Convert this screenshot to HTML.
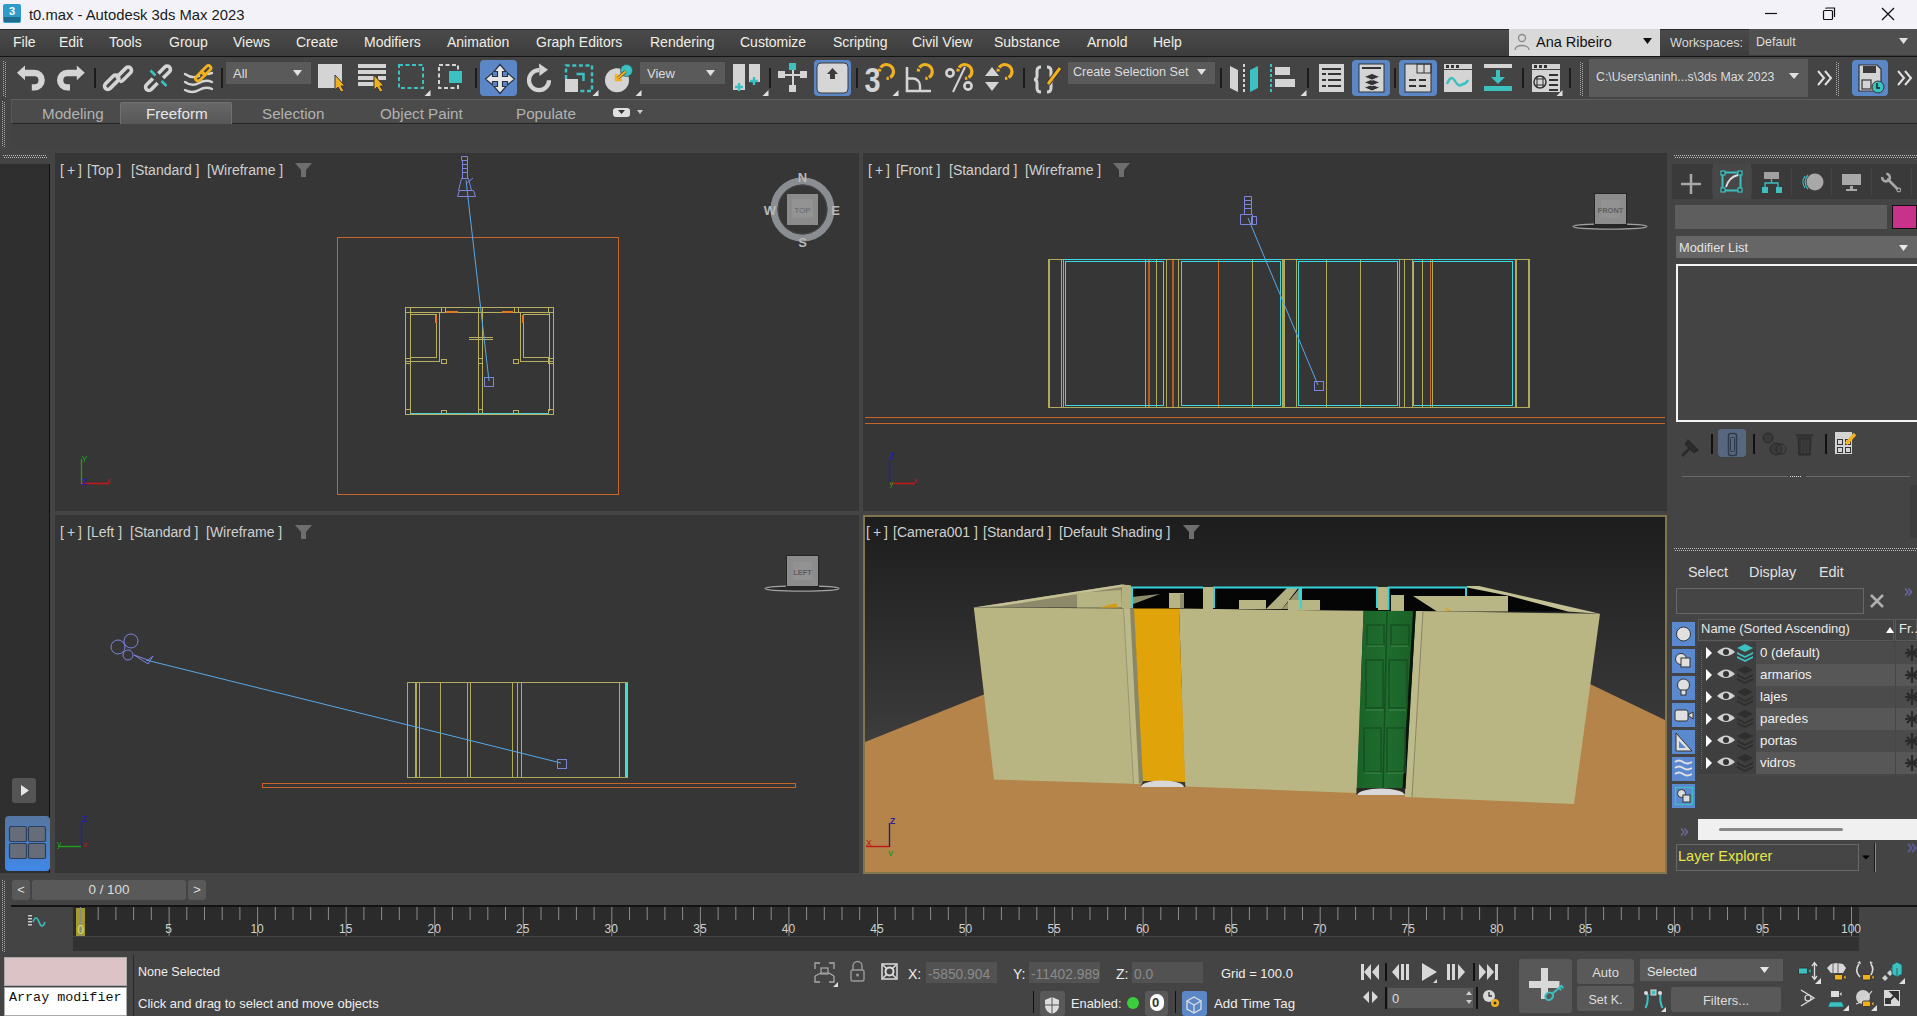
<!DOCTYPE html>
<html><head><meta charset="utf-8"><title>3ds Max</title>
<style>
*{box-sizing:border-box;margin:0;padding:0}
html,body{width:1917px;height:1016px;overflow:hidden;background:#444;font-family:"Liberation Sans",sans-serif;color:#ddd;position:relative}
.a{position:absolute;white-space:pre}
.ov{position:absolute;left:0;top:0;pointer-events:none}
#title{left:0;top:0;width:1917px;height:29px;background:#f2f2f8;color:#1a1a1a;font-size:14.8px}
#menu{left:0;top:29px;width:1917px;height:28px;background:linear-gradient(#4a4a4a,#3c3c3c);border-top:1px solid #2a2a2a;border-bottom:1px solid #141414}
#menu span{position:absolute;top:3.5px;font-size:14px;color:#f0eee6}
.dd{position:absolute;background:#5b5b5b;color:#dcdcdc;font-size:14px}
.vp{position:absolute;background:#363636;overflow:hidden}
.vlabel{position:absolute;left:0;top:9px;font-size:14px;color:#d0d0d0;white-space:pre;letter-spacing:0}
.vlabel span{word-spacing:0}
.btn{position:absolute;background:#595959;border-radius:3px;color:#ddd;font-size:13px;text-align:center}

</style></head><body>
<div id="title" class="a">
  <div class="a" style="left:29px;top:6.5px">t0.max - Autodesk 3ds Max 2023</div>
</div>
<div id="menu" class="a">
<span style="left:13px">File</span><span style="left:59px">Edit</span><span style="left:109px">Tools</span><span style="left:169px">Group</span><span style="left:233px">Views</span><span style="left:296px">Create</span><span style="left:364px">Modifiers</span><span style="left:447px">Animation</span><span style="left:536px">Graph Editors</span><span style="left:650px">Rendering</span><span style="left:740px">Customize</span><span style="left:833px">Scripting</span><span style="left:912px">Civil View</span><span style="left:994px">Substance</span><span style="left:1087px">Arnold</span><span style="left:1153px">Help</span>
</div>
<div class="a" style="left:1509px;top:29px;width:151px;height:27px;background:#d9d9d9"></div>
<div class="a" style="left:1536px;top:34px;font-size:14.5px;color:#111">Ana Ribeiro</div>
<div class="a" style="left:1670px;top:36px;font-size:12.7px;color:#d8d8d8">Workspaces:</div>
<div class="a" style="left:1749px;top:29px;width:168px;height:26px;background:#4f4f4f"></div>
<div class="a" style="left:1756px;top:35px;font-size:12.5px;color:#ddd">Default</div>
<!-- toolbar -->
<div class="a" style="left:226px;top:62px;width:85px;height:22px;background:#5a5a5a"></div>
<div class="a" style="left:233px;top:66px;font-size:13px;color:#ddd">All</div>
<div class="a" style="left:640px;top:62px;width:85px;height:22px;background:#5a5a5a"></div>
<div class="a" style="left:647px;top:66px;font-size:13px;color:#ddd">View</div>
<div class="a" style="left:1068px;top:62px;width:147px;height:22px;background:#5a5a5a"></div>
<div class="a" style="left:1073px;top:65px;font-size:12.6px;color:#ddd">Create Selection Set</div>
<div class="a" style="left:1589px;top:59px;width:219px;height:38px;background:#5a5a5a"></div>
<div class="a" style="left:1596px;top:70px;font-size:12.3px;color:#ddd">C:\Users\aninh...s\3ds Max 2023</div>
<div class="a" style="left:480px;top:60px;width:37px;height:36px;background:#5b87c6;border-radius:4px"></div>
<div class="a" style="left:814px;top:60px;width:37px;height:36px;background:#5b87c6;border-radius:4px"></div>
<div class="a" style="left:1352px;top:60px;width:38px;height:36px;background:#5b87c6;border-radius:4px"></div>
<div class="a" style="left:1399px;top:60px;width:38px;height:36px;background:#5b87c6;border-radius:4px"></div>
<div class="a" style="left:1852px;top:60px;width:36px;height:36px;background:#5b87c6;border-radius:4px"></div>
<!-- ribbon -->
<div class="a" style="left:11px;top:99px;width:1906px;height:25px;background:#4b4b4b;border-top:1px solid #5e5e5e;border-left:1px solid #585858;border-bottom:1px solid #262626"></div>
<div class="a" style="left:120px;top:102px;width:112px;height:22px;background:linear-gradient(#676767,#575757);border:1px solid #707070;border-bottom:none;border-radius:2px 2px 0 0"></div>
<div class="a" style="left:42px;top:104.5px;font-size:15.2px;color:#b2b2b2">Modeling</div>
<div class="a" style="left:146px;top:104.5px;font-size:15.2px;color:#e6e6e6">Freeform</div>
<div class="a" style="left:262px;top:104.5px;font-size:15.2px;color:#b2b2b2">Selection</div>
<div class="a" style="left:380px;top:104.5px;font-size:15.2px;color:#b2b2b2">Object Paint</div>
<div class="a" style="left:516px;top:104.5px;font-size:15.2px;color:#b2b2b2">Populate</div>
<div class="a" style="left:11px;top:124px;width:1906px;height:24px;background:#434343"></div>
<!-- left strip -->
<div class="a" style="left:0;top:164px;width:49px;height:709px;background:#2f2f2f"></div>
<div class="a" style="left:49px;top:164px;width:1px;height:709px;background:#0e0e0e"></div>

<!-- TOP viewport -->
<div class="vp" style="left:55px;top:153px;width:804px;height:358px">
<svg width="804" height="358" viewBox="55 153 804 358" style="position:absolute;left:0;top:0">
 <g fill="none" stroke-width="1" shape-rendering="crispEdges">
  <rect x="337" y="237" width="281.5" height="257.5" stroke="#c8662a"/>
  <g stroke="#b8b060">
   <rect x="405.5" y="307.5" width="148" height="107"/>
   <path d="M410.5 410.5V312.5H549.5V410.5"/>
   <path d="M478.5 307.5V414.5M482.5 307.5V414.5"/>
   <path d="M410.5 314.5H436.5V357.5H410.5 M439.5 312.5V361.5H405.5"/>
   <path d="M549.5 314.5H523.5V357.5H549.5 M520.5 312.5V361.5H553.5"/>
   <rect x="405.5" y="307.5" width="5" height="5"/><rect x="548.5" y="307.5" width="5" height="5"/>
   <rect x="405.5" y="409.5" width="5" height="5"/><rect x="548.5" y="409.5" width="5" height="5"/>
   <rect x="478.5" y="358.5" width="4" height="5"/><rect x="478.5" y="409.5" width="4" height="5"/>
   <rect x="405.5" y="358.5" width="5" height="5"/><rect x="548.5" y="358.5" width="5" height="5"/>
   <rect x="441.5" y="359.5" width="5" height="4"/><rect x="513.5" y="359.5" width="5" height="4"/>
   <rect x="441.5" y="410.5" width="5" height="4"/><rect x="513.5" y="410.5" width="5" height="4"/>
   <rect x="441.5" y="307.5" width="4" height="5"/><rect x="514.5" y="307.5" width="4" height="5"/>
   <path d="M468.5 337.5H492.5M468.5 339.5H492.5"/>
  </g>
  <g stroke="#e07a20" stroke-width="2">
   <path d="M446 312H458M502 312H513M436 315V323M523 315V323"/>
  </g>
  <path d="M410 413.5H549" stroke="#50d0d8" stroke-width="1.5"/>
 </g>
 <g fill="none" stroke="#7c84dc" stroke-width="1">
  <path d="M466 180L489 381" stroke="#58a8e8"/>
  <rect x="484.5" y="377.5" width="9" height="9"/>
  <path d="M461.5 156.5h6v4h-6zM462.5 160.5h5v18h-5zM462.5 164.5h5M462.5 168.5h5M462.5 172.5h5M461.5 178.5h7l3 12h-13z M459.5 190.5h14l2 6h-18z M466 184l7 -6"/>
 </g>
 <!-- compass -->
 <circle cx="802.5" cy="209.5" r="28.5" fill="none" stroke="#8a8d92" stroke-width="7"/>
 <circle cx="802.5" cy="209.5" r="24.5" fill="none" stroke="#4a4a4a" stroke-width="1"/>
 <rect x="787" y="194" width="31" height="31" fill="#8b8b8b"/>
 <rect x="792" y="199" width="21" height="19" fill="#939393"/>
 <text x="802.5" y="213" font-size="8" fill="#666" text-anchor="middle" font-family="Liberation Sans">TOP</text>
 <g font-family="Liberation Sans" font-weight="bold" font-size="13" fill="#b8b8b8" text-anchor="middle">
  <text x="802.5" y="181.5">N</text><text x="770" y="214.5">W</text><text x="835.5" y="214.5">E</text><text x="802.5" y="246.5">S</text>
 </g>
 <!-- axis -->
 <path d="M81.5 459V484" stroke="#1ea01e" stroke-width="1.3"/><path d="M82 483.5H109" stroke="#c01818" stroke-width="1.6"/>
 <text x="81.5" y="462" font-size="9" fill="#1ea01e" font-family="Liberation Sans">Y</text>
 <text x="82" y="484.5" font-size="8.5" font-weight="bold" fill="#2020c0" font-family="Liberation Sans">Z</text>
 <text x="107" y="483" font-size="7" fill="#c01818" font-family="Liberation Sans">x</text>
</svg>
<div class="vlabel"><span style="position:absolute;left:5px;letter-spacing:3px">[+]</span><span style="position:absolute;left:32px">[Top ]</span><span style="position:absolute;left:76px">[Standard ]</span><span style="position:absolute;left:152px">[Wireframe ]</span></div>
</div>
<!-- FRONT viewport -->
<div class="vp" style="left:863px;top:153px;width:804px;height:358px">
<svg width="804" height="358" viewBox="863 153 804 358" style="position:absolute;left:0;top:0">
  <g fill="none" shape-rendering="crispEdges">
  <path d="M865 417H1665M865 423H1665" stroke="#c8662a"/>
  <rect x="1048.5" y="259.5" width="481" height="148" stroke="#b0aa5c"/>
  <path d="M1061.5 259.5V407.5M1063.5 259.5V407.5M1145.5 259.5V407.5M1156.5 259.5V407.5M1166.5 259.5V407.5M1178.5 259.5V407.5M1252.5 259.5V407.5M1296.5 259.5V407.5M1326.5 259.5V407.5M1360.5 259.5V407.5M1399.5 259.5V407.5M1404.5 259.5V407.5M1412.5 259.5V407.5M1422.5 259.5V407.5M1432.5 259.5V407.5" stroke="#b0aa5c"/>
  <rect x="1048.0" y="259" width="2" height="149" fill="#b0aa5c" stroke="none"/>
  <rect x="1281.5" y="259" width="3" height="149" fill="#b0aa5c" stroke="none"/>
  <rect x="1515.0" y="259" width="2" height="149" fill="#b0aa5c" stroke="none"/>
  <rect x="1528.0" y="259" width="2" height="149" fill="#b0aa5c" stroke="none"/>
  <path d="M1149 260V407" stroke="#b85e1c" stroke-width="1.6"/>
  <path d="M1173 260V407" stroke="#b85e1c" stroke-width="1.6"/>
  <path d="M1218.5 260V407" stroke="#d06a1e" stroke-width="1"/>
  <path d="M1430.5 260V407" stroke="#d06a1e" stroke-width="1"/>
  <g stroke="#3ad8e0">
   <path d="M1063 259.5H1166"/>
   <path d="M1179 259.5H1282"/>
   <path d="M1296 259.5H1400"/>
   <path d="M1412 259.5H1516"/>
   <rect x="1065.5" y="261.5" width="98.0" height="144"/>
   <rect x="1181.5" y="261.5" width="99.0" height="144"/>
   <rect x="1298.5" y="261.5" width="99.0" height="144"/>
   <rect x="1413.5" y="261.5" width="99.0" height="144"/>
  </g>
 </g>
 <g fill="none" stroke="#7c84dc" stroke-width="1">
  <path d="M1248 218L1318 385" stroke="#58a8e8"/>
  <rect x="1314.5" y="381.5" width="9" height="9"/>
  <path d="M1244.5 196.5h7v18h-7z M1244.5 200.5h7M1244.5 204.5h7M1244.5 208.5h7 M1240.5 214.5h12v10h-12z M1251.5 216.5h5v8h-5z"/>
 </g>
 <!-- viewcube -->
 <ellipse cx="1610" cy="226.5" rx="37" ry="2.6" fill="#262626" stroke="#a0a0a0" stroke-width="1.2"/>
 <rect x="1594.5" y="193.5" width="32" height="31" fill="#8c8c8c" stroke="#252525" stroke-width="1"/>
 <rect x="1601" y="200" width="19" height="18" fill="#929292"/>
 <text x="1610.5" y="213" font-size="7.5" font-weight="bold" fill="#5e5e5e" text-anchor="middle" font-family="Liberation Sans">FRONT</text>
 <path d="M889.5 460V484" stroke="#2020b0" stroke-width="1.4"/><path d="M890 483.5H915" stroke="#c01818" stroke-width="1.6"/>
 <text x="889" y="459" font-size="9" font-weight="bold" fill="#2020b0" font-family="Liberation Sans">Z</text>
 <text x="889.5" y="486" font-size="8" fill="#1ea01e" font-family="Liberation Sans">y</text>
 <text x="914" y="483" font-size="7" fill="#c01818" font-family="Liberation Sans">x</text>
</svg>
<div class="vlabel"><span style="position:absolute;left:5px;letter-spacing:3px">[+]</span><span style="position:absolute;left:33px">[Front ]</span><span style="position:absolute;left:86px">[Standard ]</span><span style="position:absolute;left:162px">[Wireframe ]</span></div>
</div>
<!-- LEFT viewport -->
<div class="vp" style="left:55px;top:515px;width:804px;height:358px">
<svg width="804" height="358" viewBox="55 515 804 358" style="position:absolute;left:0;top:0">
 <g fill="none" stroke-width="1" shape-rendering="crispEdges">
  <rect x="262.5" y="783.5" width="533" height="4" stroke="#c8662a"/>
  <g stroke="#b0aa5c">
   <rect x="407.5" y="682.5" width="220" height="95"/>
   <path d="M419.5 682.5V777.5M440.5 682.5V777.5M467.5 682.5V777.5M470.5 682.5V777.5M512.5 682.5V777.5M517.5 682.5V777.5M521.5 682.5V777.5M619.5 682.5V777.5"/>
  </g>
  <rect x="415" y="682" width="2" height="96" fill="#b0aa5c"/>
  <rect x="625" y="683" width="2.5" height="94" fill="#40e0d0"/>
 </g>
 <g fill="none" stroke="#7c84dc" stroke-width="1">
  <path d="M146 660L561 763" stroke="#58a8e8"/>
  <rect x="557.5" y="759.5" width="9" height="9"/>
  <circle cx="118" cy="647" r="7"/><circle cx="131" cy="641" r="7"/><circle cx="128" cy="655" r="5"/>
  <path d="M134 655l14 5l5 -4l-5 8z"/>
 </g>
 <ellipse cx="802" cy="588.5" rx="37" ry="2.6" fill="#262626" stroke="#a0a0a0" stroke-width="1.2"/>
 <rect x="786.5" y="555.5" width="32" height="31" fill="#8c8c8c" stroke="#252525" stroke-width="1"/>
 <rect x="793" y="562" width="19" height="18" fill="#929292"/>
 <text x="802.5" y="575" font-size="7.5" font-weight="bold" fill="#5e5e5e" text-anchor="middle" font-family="Liberation Sans">LEFT</text>
 <path d="M81.5 822V847" stroke="#2020b0" stroke-width="1.4"/><path d="M58 846.5H81" stroke="#1ea01e" stroke-width="1.4"/>
 <text x="82" y="822" font-size="8.5" font-weight="bold" fill="#2020b0" font-family="Liberation Sans">Z</text>
 <text x="57" y="847" font-size="8.5" fill="#1ea01e" font-family="Liberation Sans">y</text>
 <text x="83" y="847" font-size="8" fill="#c01818" font-family="Liberation Sans">x</text>
</svg>
<div class="vlabel"><span style="position:absolute;left:5px;letter-spacing:3px">[+]</span><span style="position:absolute;left:32px">[Left ]</span><span style="position:absolute;left:75px">[Standard ]</span><span style="position:absolute;left:151px">[Wireframe ]</span></div>
</div>
<!-- CAMERA viewport -->
<div class="vp" style="left:863px;top:515px;width:804px;height:359px;background:#80754e;">
<svg width="800" height="355" viewBox="865 517 800 355" style="position:absolute;left:2px;top:2px">
 <defs><linearGradient id="sky" x1="0" y1="0" x2="0" y2="1"><stop offset="0" stop-color="#1d1d1d"/><stop offset="0.55" stop-color="#383838"/><stop offset="1" stop-color="#555"/></linearGradient>
 <linearGradient id="gd" x1="0" y1="0" x2="1" y2="0"><stop offset="0" stop-color="#1a6228"/><stop offset="0.5" stop-color="#1f6e2e"/><stop offset="1" stop-color="#1a5f27"/></linearGradient></defs>
 <rect x="865" y="517" width="800" height="355" fill="url(#sky)"/>
 <path d="M865 742L1000 688L1590 684L1665 720V872H865Z" fill="#b5844a"/>
 <!-- roofline: black openings -->
 <path d="M1131 587H1467L1510 596L1568 611.5H1131Z" fill="#050505"/>
 <!-- left side wall top & inner -->
 <path d="M973.8 607.5L1122 584.6L1131 585.5L1131 607.5Z" fill="#8d8a69"/>
 <path d="M973.8 607.5L1122 584.6L1131 585.5L1001 606Z" fill="#c4c195"/>
 <path d="M1077 593L1121 590L1122 607.5H1077Z" fill="#b7b483"/>
 <path d="M1100 607.5L1116 603L1118 607.5Z" fill="#d89a10"/>
 <path d="M1124 607.5L1160 594L1131 597Z" fill="#8f8c6b"/>
 <path d="M1122 585L1131 585.5V608H1122Z" fill="#b5b282"/>
 <!-- back wall posts and interior blocks -->
 <rect x="1169" y="593" width="15" height="15" fill="#b7b483"/><rect x="1180" y="594" width="4" height="14" fill="#908d6c"/>
 <rect x="1203" y="587" width="10" height="22" fill="#b9b686"/>
 <rect x="1239" y="600" width="27" height="9" fill="#b9b686"/>
 <path d="M1288 587H1299L1282 609H1266Z" fill="#b1ae80"/>
 <path d="M1299 589V600L1288 609H1282Z" fill="#99966f"/>
 <rect x="1288" y="600" width="32" height="10" fill="#b9b686"/>
 <rect x="1378" y="587" width="10" height="23" fill="#b9b686"/>
 <rect x="1391" y="595" width="13" height="16" fill="#b9b686"/>
 <path d="M1413 596H1508V611.5H1437Z" fill="#b9b686"/>
 <path d="M1444 607L1452 611H1448Z" fill="#e0a010"/>
 <path d="M1467 586L1479 586L1600 613.8L1568 611.5L1510 596L1467 587.5Z" fill="#c4c195"/>
 <!-- cyan window frames -->
 <g fill="none" stroke="#35d4dc" stroke-width="2">
  <path d="M1132 608V587.5H1203M1214 608V587.5H1299.5V600M1301 609V587.5H1377V608M1388.5 610V587.5H1466V596"/>
 </g>
 <!-- front walls -->
 <path d="M973.8 607.5L1134 608.5L1141 784L994 779.5Z" fill="#b8b583"/>
 <path d="M1123 608L1130 608.3L1139 784L1133 784Z" fill="#bdba89"/>
 <path d="M1123.5 608L1133.5 784" stroke="#8f8c6c" stroke-width="0.8"/>
 <path d="M1130 608.3L1134.5 608.5L1143.5 781L1139 784Z" fill="#8a8766"/>
 <path d="M1179 608.5L1363.6 610.8L1356.7 793L1185 786.5Z" fill="#b9b684"/>
 <path d="M1415.8 611L1600 613.8L1574 804L1405 797Z" fill="#b9b684"/>
 <path d="M1415.8 611L1423 611.5L1412 797L1405 797Z" fill="#bebb8a"/>
 <path d="M1423 611.5L1412 797" stroke="#7c7a5c" stroke-width="0.8" fill="none"/>
 <path d="M1134 608.5L1179 608.5L1185 782L1143 781Z" fill="#e0a40a"/>
 <path d="M1143 781L1185 782L1185.5 787L1141 786Z" fill="#3a3a30"/>
 <path d="M1141 787Q1143 781 1162 780.5Q1182 781 1184 787Z" fill="#d8d8d8"/>
 <path d="M1363.6 610.8L1415.8 611L1405 789L1356.7 789Z" fill="url(#gd)"/>
 <path d="M1413 611L1415.8 611L1405.5 789L1402.5 789Z" fill="#0a140c"/>
 <path d="M1387 612L1383 788" stroke="#154f21" stroke-width="1.5"/>
 <g fill="none" stroke="#165222" stroke-width="1.5">
  <path d="M1367 625h17v20h-17zM1391 625h18v20h-18zM1366 660h17v48h-17zM1389 660h18v48h-18zM1364 728h17v44h-17zM1387 728h18v44h-18z"/>
 </g>
 <g stroke="#3e8a48" stroke-width="1.2"><path d="M1367 646h17M1391 646h17M1366 710h17M1389 710h17M1364 773h17M1387 773h17"/></g>
 <path d="M1356.5 788L1405 788L1405 795L1356.5 795Z" fill="#2a2a22"/>
 <path d="M1357 795Q1360 789 1381 788.5Q1402 789 1405 795Z" fill="#d8d8d8"/>
 <path d="M889.5 823V847" stroke="#28208a" stroke-width="1.4" fill="none"/>
 <path d="M866 846.5H889" stroke="#c01818" stroke-width="1.4"/>
 <text x="890" y="823.5" font-size="8.5" font-weight="bold" fill="#2a20a0" font-family="Liberation Sans">Z</text>
 <text x="866" y="846" font-size="8.5" fill="#b01818" font-family="Liberation Sans">X</text>
 <text x="888" y="856" font-size="9" font-weight="bold" fill="#2a9a2a" font-family="Liberation Sans">v</text>
</svg>
<div class="vlabel" style="left:0;top:9px"><span style="position:absolute;left:3px;letter-spacing:3px">[+]</span><span style="position:absolute;left:30px">[Camera001 ]</span><span style="position:absolute;left:120px">[Standard ]</span><span style="position:absolute;left:196px">[Default Shading ]</span></div>
</div>

<!-- command panel -->
<div class="a" style="left:1672px;top:164px;width:245px;height:35px;background:#3a3a3a"></div>
<div class="a" style="left:1713px;top:164px;width:38px;height:35px;background:#474747"></div>
<div class="a" style="left:1675px;top:205px;width:212px;height:24px;background:#5e5e5e"></div>
<div class="a" style="left:1892px;top:205px;width:25px;height:24px;background:#c8328a;border:1px solid #111"></div>
<div class="a" style="left:1676px;top:236px;width:241px;height:22px;background:#666"></div>
<div class="a" style="left:1679px;top:240px;font-size:12.8px;color:#e4e4e4">Modifier List</div>
<div class="a" style="left:1676px;top:264px;width:243px;height:158px;border:2px solid #f4f4f4;background:#444"></div>
<div class="a" style="left:1718px;top:429px;width:28px;height:28px;background:#56677f;border-radius:4px"></div>
<div class="a" style="left:1682px;top:476px;width:106px;height:1px;background:#6a6a6a"></div>
<div class="a" style="left:1806px;top:476px;width:104px;height:1px;background:#6a6a6a"></div>
<div class="a" style="left:1910px;top:485px;width:7px;height:53px;background:#3d3d3d;border-radius:3px 0 0 3px"></div>
<!-- scene explorer -->
<div class="a" style="left:1688px;top:564px;font-size:14.4px;color:#e0e0e0">Select</div>
<div class="a" style="left:1749px;top:564px;font-size:14.4px;color:#e0e0e0">Display</div>
<div class="a" style="left:1819px;top:564px;font-size:14.4px;color:#e0e0e0">Edit</div>
<div class="a" style="left:1676px;top:588px;width:188px;height:26px;border:1px solid #686868;background:#454545"></div>
<div class="a" style="left:1698px;top:618px;width:219px;height:158px;background:#464646"></div>
<div class="a" style="left:1698px;top:619px;width:196px;height:22px;background:#434343;border:1px solid #5a5a5a"></div>
<div class="a" style="left:1895px;top:619px;width:22px;height:22px;background:#434343;border:1px solid #5a5a5a"></div>
<div class="a" style="left:1701px;top:621px;font-size:13px;color:#e8e8e8">Name (Sorted Ascending)</div>
<div class="a" style="left:1899px;top:621px;font-size:13px;color:#e8e8e8">Fr..</div>
<div class="a" style="left:1698px;top:642px;width:58px;height:132px;background:#3f3f3f"></div>
<div class="a" style="left:1756px;top:642px;width:139px;height:22px;background:#4b4b4b"></div>
<div class="a" style="left:1756px;top:664px;width:139px;height:22px;background:#575757"></div>
<div class="a" style="left:1756px;top:686px;width:139px;height:22px;background:#4b4b4b"></div>
<div class="a" style="left:1756px;top:708px;width:139px;height:22px;background:#575757"></div>
<div class="a" style="left:1756px;top:730px;width:139px;height:22px;background:#4b4b4b"></div>
<div class="a" style="left:1756px;top:752px;width:139px;height:22px;background:#575757"></div>
<div class="a" style="left:1896px;top:642px;width:21px;height:22px;background:#4b4b4b"></div>
<div class="a" style="left:1896px;top:664px;width:21px;height:22px;background:#575757"></div>
<div class="a" style="left:1896px;top:686px;width:21px;height:22px;background:#4b4b4b"></div>
<div class="a" style="left:1896px;top:708px;width:21px;height:22px;background:#575757"></div>
<div class="a" style="left:1896px;top:730px;width:21px;height:22px;background:#4b4b4b"></div>
<div class="a" style="left:1896px;top:752px;width:21px;height:22px;background:#575757"></div>
<div class="a" style="left:1760px;top:645px;font-size:13.3px;color:#f0f0f0">0 (default)</div>
<div class="a" style="left:1760px;top:667px;font-size:13.3px;color:#f0f0f0">armarios</div>
<div class="a" style="left:1760px;top:689px;font-size:13.3px;color:#f0f0f0">lajes</div>
<div class="a" style="left:1760px;top:711px;font-size:13.3px;color:#f0f0f0">paredes</div>
<div class="a" style="left:1760px;top:733px;font-size:13.3px;color:#f0f0f0">portas</div>
<div class="a" style="left:1760px;top:755px;font-size:13.3px;color:#f0f0f0">vidros</div>
<div class="a" style="left:1698px;top:819px;width:219px;height:21px;background:#f0f0f0"></div>
<div class="a" style="left:1719px;top:828px;width:124px;height:3px;background:#888;border-radius:2px"></div>
<div class="a" style="left:1676px;top:844px;width:183px;height:27px;border:1px solid #686868;background:#454545"></div>
<div class="a" style="left:1678px;top:848px;font-size:14.5px;color:#e6e64a">Layer Explorer</div>
<div class="a" style="left:1874px;top:843px;width:1px;height:29px;background:#1a1a1a"></div><div class="a" style="left:1875px;top:843px;width:1px;height:29px;background:#8a8a8a"></div>

<div class="btn" style="left:12px;top:880px;width:18px;height:20px;font-size:13px;line-height:20px">&lt;</div>
<div class="btn" style="left:32px;top:880px;width:154px;height:20px;font-size:13.4px;line-height:20px">0 / 100</div>
<div class="btn" style="left:188px;top:880px;width:18px;height:20px;font-size:13px;line-height:20px">&gt;</div>
<div class="a" style="left:11px;top:905px;width:1906px;height:2px;background:#141414"></div>
<div class="a" style="left:73px;top:907px;width:1786px;height:44px;background:#2b2b2b"></div>
<div class="a" style="left:73px;top:936px;width:1786px;height:1px;background:#444"></div>
<div class="a" style="left:73px;top:937px;width:1786px;height:14px;background:#323232"></div>
<div class="a" style="left:76px;top:908px;width:9px;height:28px;background:#a39a30"></div>
<!-- status -->
<div class="a" style="left:4px;top:957px;width:123px;height:29px;background:#dcc3c5;border:1px solid #aaa"></div>
<div class="a" style="left:4px;top:987px;width:123px;height:29px;background:#fff;border:1px solid #aaa"></div>
<div class="a" style="left:9px;top:990px;font-family:'Liberation Mono',monospace;font-size:13.4px;color:#111">Array modifier</div>
<div class="a" style="left:133px;top:955px;width:1px;height:61px;background:#2a2a2a"></div>
<div class="a" style="left:138px;top:965px;font-size:12.5px;color:#eee">None Selected</div>
<div class="a" style="left:138px;top:996px;font-size:13px;color:#eee">Click and drag to select and move objects</div>
<div class="a" style="left:908px;top:966px;font-size:14px;color:#eee">X:</div>
<div class="a" style="left:926px;top:962px;width:71px;height:21px;background:#525252"></div>
<div class="a" style="left:928px;top:967px;font-size:13.8px;color:#8a8a8a">-5850.904</div>
<div class="a" style="left:1013px;top:966px;font-size:14px;color:#eee">Y:</div>
<div class="a" style="left:1029px;top:962px;width:71px;height:21px;background:#525252"></div>
<div class="a" style="left:1031px;top:967px;font-size:13.8px;color:#8a8a8a">-11402.989</div>
<div class="a" style="left:1116px;top:966px;font-size:14px;color:#eee">Z:</div>
<div class="a" style="left:1132px;top:962px;width:71px;height:21px;background:#525252"></div>
<div class="a" style="left:1134px;top:967px;font-size:13.8px;color:#8a8a8a">0.0</div>
<div class="a" style="left:1221px;top:966px;font-size:13px;color:#eee">Grid = 100.0</div>
<div class="a" style="left:1033px;top:991px;width:1px;height:22px;background:#111"></div>
<div class="btn" style="left:1040px;top:991px;width:25px;height:25px"></div>
<div class="a" style="left:1071px;top:996px;font-size:12.8px;color:#eee">Enabled:</div>
<div class="a" style="left:1127px;top:997px;width:12px;height:12px;border-radius:6px;background:#3ccd3c"></div>
<div class="btn" style="left:1145px;top:991px;width:23px;height:25px"></div>
<div class="a" style="left:1150px;top:994px;width:14px;height:17px;border-radius:8px;background:#fff"></div>
<div class="a" style="left:1152px;top:995px;font-size:13px;font-weight:bold;color:#333">0</div>
<div class="a" style="left:1175px;top:991px;width:1px;height:22px;background:#111"></div>
<div class="a" style="left:1182px;top:991px;width:25px;height:25px;background:#5b87c6;border-radius:3px"></div>
<div class="a" style="left:1214px;top:996px;font-size:13.3px;color:#eee">Add Time Tag</div>
<!-- playback -->
<div class="a" style="left:1388px;top:988px;width:85px;height:20px;background:#5a5a5a"></div>
<div class="a" style="left:1392px;top:991px;font-size:13px;color:#ddd">0</div>
<div class="btn" style="left:1519px;top:959px;width:53px;height:54px;background:#585858"></div>
<div class="btn" style="left:1577px;top:959px;width:57px;height:25px;line-height:28px">Auto</div>
<div class="btn" style="left:1577px;top:986px;width:57px;height:25px;line-height:28px;font-size:12.5px">Set K.</div>
<div class="a" style="left:1640px;top:959px;width:143px;height:22px;background:#5a5a5a"></div>
<div class="a" style="left:1647px;top:964px;font-size:12.8px;color:#e4e4e4">Selected</div>
<div class="btn" style="left:1671px;top:987px;width:110px;height:25px;line-height:28px">Filters...</div>

<svg class="ov" width="1917" height="1016" viewBox="0 0 1917 1016">
<rect x="3" y="4" width="18" height="19" rx="2" fill="#2f9bcb"/><rect x="4" y="17" width="16" height="5" fill="#1f6d8e"/>
<text x="12" y="15" font-size="11" font-weight="bold" fill="#fff" text-anchor="middle" font-family="Liberation Sans">3</text>
<path d="M1765 13.5H1777" stroke="#111" stroke-width="1.2"/>
<rect x="1823.5" y="10.5" width="9" height="9" fill="none" stroke="#111" stroke-width="1.2" rx="1"/><path d="M1825.5 8.5Q1825.5 8 1827 8H1834.5V17" fill="none" stroke="#111" stroke-width="1.2"/>
<path d="M1882 8L1894 20M1894 8L1882 20" stroke="#111" stroke-width="1.3"/>
<circle cx="1522" cy="38" r="3.5" fill="none" stroke="#888" stroke-width="1.3"/><path d="M1515 50c0-6 14-6 14 0" fill="none" stroke="#888" stroke-width="1.3"/>
<path d="M1643 38h9l-4.5 6z" fill="#111"/>
<path d="M1899 38h9l-4.5 6z" fill="#e0e0e0"/>
<rect x="3" y="61" width="1" height="1" fill="#aaa"/><rect x="5" y="62" width="1" height="1" fill="#aaa"/>
<rect x="3" y="63" width="1" height="1" fill="#aaa"/><rect x="5" y="64" width="1" height="1" fill="#aaa"/>
<rect x="3" y="65" width="1" height="1" fill="#aaa"/><rect x="5" y="66" width="1" height="1" fill="#aaa"/>
<rect x="3" y="67" width="1" height="1" fill="#aaa"/><rect x="5" y="68" width="1" height="1" fill="#aaa"/>
<rect x="3" y="69" width="1" height="1" fill="#aaa"/><rect x="5" y="70" width="1" height="1" fill="#aaa"/>
<rect x="3" y="71" width="1" height="1" fill="#aaa"/><rect x="5" y="72" width="1" height="1" fill="#aaa"/>
<rect x="3" y="73" width="1" height="1" fill="#aaa"/><rect x="5" y="74" width="1" height="1" fill="#aaa"/>
<rect x="3" y="75" width="1" height="1" fill="#aaa"/><rect x="5" y="76" width="1" height="1" fill="#aaa"/>
<rect x="3" y="77" width="1" height="1" fill="#aaa"/><rect x="5" y="78" width="1" height="1" fill="#aaa"/>
<rect x="3" y="79" width="1" height="1" fill="#aaa"/><rect x="5" y="80" width="1" height="1" fill="#aaa"/>
<rect x="3" y="81" width="1" height="1" fill="#aaa"/><rect x="5" y="82" width="1" height="1" fill="#aaa"/>
<rect x="3" y="83" width="1" height="1" fill="#aaa"/><rect x="5" y="84" width="1" height="1" fill="#aaa"/>
<rect x="3" y="85" width="1" height="1" fill="#aaa"/><rect x="5" y="86" width="1" height="1" fill="#aaa"/>
<rect x="3" y="87" width="1" height="1" fill="#aaa"/><rect x="5" y="88" width="1" height="1" fill="#aaa"/>
<rect x="3" y="89" width="1" height="1" fill="#aaa"/><rect x="5" y="90" width="1" height="1" fill="#aaa"/>
<rect x="3" y="91" width="1" height="1" fill="#aaa"/><rect x="5" y="92" width="1" height="1" fill="#aaa"/>
<rect x="3" y="93" width="1" height="1" fill="#aaa"/><rect x="5" y="94" width="1" height="1" fill="#aaa"/>
<rect x="3" y="95" width="1" height="1" fill="#aaa"/><rect x="5" y="96" width="1" height="1" fill="#aaa"/>
<rect x="94" y="68" width="2" height="20" fill="#1c1c1c"/>
<rect x="221" y="68" width="2" height="20" fill="#1c1c1c"/>
<rect x="475" y="68" width="2" height="20" fill="#1c1c1c"/>
<rect x="769" y="68" width="2" height="20" fill="#1c1c1c"/>
<rect x="856" y="68" width="2" height="20" fill="#1c1c1c"/>
<rect x="1023" y="68" width="2" height="20" fill="#1c1c1c"/>
<rect x="1220" y="68" width="2" height="20" fill="#1c1c1c"/>
<rect x="1307" y="68" width="2" height="20" fill="#1c1c1c"/>
<rect x="1394" y="68" width="2" height="20" fill="#1c1c1c"/>
<rect x="1522" y="68" width="2" height="20" fill="#1c1c1c"/>
<rect x="1569" y="68" width="2" height="20" fill="#1c1c1c"/>
<rect x="1580" y="62" width="1" height="1" fill="#aaa"/><rect x="1582" y="63" width="1" height="1" fill="#aaa"/>
<rect x="1580" y="64" width="1" height="1" fill="#aaa"/><rect x="1582" y="65" width="1" height="1" fill="#aaa"/>
<rect x="1580" y="66" width="1" height="1" fill="#aaa"/><rect x="1582" y="67" width="1" height="1" fill="#aaa"/>
<rect x="1580" y="68" width="1" height="1" fill="#aaa"/><rect x="1582" y="69" width="1" height="1" fill="#aaa"/>
<rect x="1580" y="70" width="1" height="1" fill="#aaa"/><rect x="1582" y="71" width="1" height="1" fill="#aaa"/>
<rect x="1580" y="72" width="1" height="1" fill="#aaa"/><rect x="1582" y="73" width="1" height="1" fill="#aaa"/>
<rect x="1580" y="74" width="1" height="1" fill="#aaa"/><rect x="1582" y="75" width="1" height="1" fill="#aaa"/>
<rect x="1580" y="76" width="1" height="1" fill="#aaa"/><rect x="1582" y="77" width="1" height="1" fill="#aaa"/>
<rect x="1580" y="78" width="1" height="1" fill="#aaa"/><rect x="1582" y="79" width="1" height="1" fill="#aaa"/>
<rect x="1580" y="80" width="1" height="1" fill="#aaa"/><rect x="1582" y="81" width="1" height="1" fill="#aaa"/>
<rect x="1580" y="82" width="1" height="1" fill="#aaa"/><rect x="1582" y="83" width="1" height="1" fill="#aaa"/>
<rect x="1580" y="84" width="1" height="1" fill="#aaa"/><rect x="1582" y="85" width="1" height="1" fill="#aaa"/>
<rect x="1580" y="86" width="1" height="1" fill="#aaa"/><rect x="1582" y="87" width="1" height="1" fill="#aaa"/>
<rect x="1580" y="88" width="1" height="1" fill="#aaa"/><rect x="1582" y="89" width="1" height="1" fill="#aaa"/>
<rect x="1580" y="90" width="1" height="1" fill="#aaa"/><rect x="1582" y="91" width="1" height="1" fill="#aaa"/>
<rect x="1580" y="92" width="1" height="1" fill="#aaa"/><rect x="1582" y="93" width="1" height="1" fill="#aaa"/>
<rect x="1580" y="94" width="1" height="1" fill="#aaa"/><rect x="1582" y="95" width="1" height="1" fill="#aaa"/>
<rect x="1836" y="62" width="1" height="1" fill="#aaa"/><rect x="1838" y="63" width="1" height="1" fill="#aaa"/>
<rect x="1836" y="64" width="1" height="1" fill="#aaa"/><rect x="1838" y="65" width="1" height="1" fill="#aaa"/>
<rect x="1836" y="66" width="1" height="1" fill="#aaa"/><rect x="1838" y="67" width="1" height="1" fill="#aaa"/>
<rect x="1836" y="68" width="1" height="1" fill="#aaa"/><rect x="1838" y="69" width="1" height="1" fill="#aaa"/>
<rect x="1836" y="70" width="1" height="1" fill="#aaa"/><rect x="1838" y="71" width="1" height="1" fill="#aaa"/>
<rect x="1836" y="72" width="1" height="1" fill="#aaa"/><rect x="1838" y="73" width="1" height="1" fill="#aaa"/>
<rect x="1836" y="74" width="1" height="1" fill="#aaa"/><rect x="1838" y="75" width="1" height="1" fill="#aaa"/>
<rect x="1836" y="76" width="1" height="1" fill="#aaa"/><rect x="1838" y="77" width="1" height="1" fill="#aaa"/>
<rect x="1836" y="78" width="1" height="1" fill="#aaa"/><rect x="1838" y="79" width="1" height="1" fill="#aaa"/>
<rect x="1836" y="80" width="1" height="1" fill="#aaa"/><rect x="1838" y="81" width="1" height="1" fill="#aaa"/>
<rect x="1836" y="82" width="1" height="1" fill="#aaa"/><rect x="1838" y="83" width="1" height="1" fill="#aaa"/>
<rect x="1836" y="84" width="1" height="1" fill="#aaa"/><rect x="1838" y="85" width="1" height="1" fill="#aaa"/>
<rect x="1836" y="86" width="1" height="1" fill="#aaa"/><rect x="1838" y="87" width="1" height="1" fill="#aaa"/>
<rect x="1836" y="88" width="1" height="1" fill="#aaa"/><rect x="1838" y="89" width="1" height="1" fill="#aaa"/>
<rect x="1836" y="90" width="1" height="1" fill="#aaa"/><rect x="1838" y="91" width="1" height="1" fill="#aaa"/>
<rect x="1836" y="92" width="1" height="1" fill="#aaa"/><rect x="1838" y="93" width="1" height="1" fill="#aaa"/>
<rect x="1836" y="94" width="1" height="1" fill="#aaa"/><rect x="1838" y="95" width="1" height="1" fill="#aaa"/>
<path d="M430.5 96h-6l6-6z" fill="#e0e0e0"/>
<path d="M598.5 96h-6l6-6z" fill="#e0e0e0"/>
<path d="M641.5 96h-6l6-6z" fill="#e0e0e0"/>
<path d="M768.5 96h-6l6-6z" fill="#e0e0e0"/>
<path d="M898.5 96h-6l6-6z" fill="#e0e0e0"/>
<path d="M1306.5 96h-6l6-6z" fill="#e0e0e0"/>
<path d="M1562.5 96h-6l6-6z" fill="#e0e0e0"/>
<g id="undo"><path d="M24 73H34.5A7.15 7.15 0 0 1 34.5 87.3H31.8" fill="none" stroke="#d4d4d4" stroke-width="6.3"/><path d="M17 72.8L25 65.6V80.2Z" fill="#d4d4d4"/></g>
<g transform="translate(101.8,0) scale(-1,1)"><path d="M24 73H34.5A7.15 7.15 0 0 1 34.5 87.3H31.8" fill="none" stroke="#d4d4d4" stroke-width="6.3"/><path d="M17 72.8L25 65.6V80.2Z" fill="#d4d4d4"/></g>
<g fill="none" stroke="#d4d4d4" stroke-width="3.6"><g transform="translate(125,71.5) rotate(-45)"><path d="M-8 -1.8H3A3.3 3.3 0 0 1 3 4.8H-8A3.3 3.3 0 0 1 -8 -1.8Z"/></g><g transform="translate(111,85) rotate(-45)" stroke="#444" stroke-width="6.5"><path d="M8 -4.8H-3A3.3 3.3 0 0 0 -3 1.8H8"/></g><g transform="translate(111,85) rotate(-45)"><path d="M8 -4.8H-3A3.3 3.3 0 0 0 -3 1.8H8A3.3 3.3 0 0 0 8 -4.8"/></g></g>
<g fill="none" stroke="#d4d4d4" stroke-width="3.6"><g transform="translate(165,71.5) rotate(-45)"><path d="M-6 -3.3H3A3.3 3.3 0 0 1 3 3.3H-6"/></g><g transform="translate(151,85) rotate(-45)"><path d="M6 -3.3H-3A3.3 3.3 0 0 0 -3 3.3H6"/></g></g><path d="M150.5 70.5l5 5M161.5 81l5 5" stroke="#3cc0c0" stroke-width="2.6"/>
<g fill="none" stroke="#d4d4d4" stroke-width="2.4" stroke-linecap="round"><path d="M185 74q7 5 14 2M185 82q7 5 14 1t13-1M185 90q7 4 14 0t13-1"/><path d="M208 74l4 -1"/></g>
<g fill="none" stroke="#f0b020" stroke-width="2.8"><g transform="translate(207,69.5) rotate(-45)"><path d="M-5 -2.5H2A2.5 2.5 0 0 1 2 2.5H-5Z"/></g><g transform="translate(199.5,77) rotate(-45)"><path d="M5 -2.5H-2A2.5 2.5 0 0 0 -2 2.5H5Z"/></g></g>
<path d="M293 70h9l-4.5 6z" fill="#e0e0e0"/>
<path d="M706 70h9l-4.5 6z" fill="#e0e0e0"/>
<path d="M1197 69h9l-4.5 6z" fill="#e0e0e0"/>
<path d="M1789 73h10l-5 6z" fill="#e0e0e0"/>
<rect x="318" y="64" width="24" height="24" fill="#d4d4d4"/><path d="M335 75l0 15 3-3 3 5 3-1-3-5 4 0z" fill="#f0b020" stroke="#3a3a3a" stroke-width="1"/>
<g fill="#d4d4d4"><rect x="358" y="64" width="28" height="4"/><rect x="358" y="70" width="28" height="4"/><rect x="358" y="76" width="16" height="4"/><rect x="358" y="82" width="16" height="4"/><rect x="378" y="76" width="8" height="4"/></g><path d="M374 75l0 15 3-3 3 5 3-1-3-5 4 0z" fill="#f0b020" stroke="#3a3a3a" stroke-width="1"/>
<rect x="399" y="65" width="24" height="23" fill="none" stroke="#3cc0c0" stroke-width="2" stroke-dasharray="4 2.5"/>
<rect x="439" y="65" width="19" height="23" fill="none" stroke="#d4d4d4" stroke-width="2" stroke-dasharray="4 2.5"/><rect x="449" y="71" width="13" height="12" fill="#3cc0c0"/>
<g fill="#e8e8e8" stroke="#2a3444" stroke-width="1.2" transform="translate(1.5,0.5)"><path d="M498.5 64l6 7h-3.5v5h5v-3.5l7 6-7 6v-3.5h-5v5h3.5l-6 7-6-7h3.5v-5h-5v3.5l-7-6 7-6v3.5h5v-5h-3.5z"/></g>
<path d="M549 80.2A10 10 0 1 1 539 70.2" fill="none" stroke="#d4d4d4" stroke-width="4.2"/><path d="M539 63.5L548 69.8L539.5 76Z" fill="#d4d4d4"/>
<path d="M566 79V65.5H592V91H578" fill="none" stroke="#3cc0c0" stroke-width="2.5" stroke-dasharray="4 2.6" stroke-linejoin="miter"/><rect x="565" y="79" width="13" height="13" fill="#d4d4d4"/><path d="M576.5 74h7v7" fill="none" stroke="#3cc0c0" stroke-width="2.5"/>
<circle cx="617" cy="80.2" r="12" fill="#d4d4d4"/><circle cx="626.5" cy="70.5" r="6" fill="#3cc0c0" stroke="#2f5a5a" stroke-width="0.8"/><path d="M625.5 71.5L617 79" stroke="#5a4a1a" stroke-width="3.4"/><path d="M625.5 71.5L617 79" stroke="#f0b020" stroke-width="2.2"/><path d="M616 74v6h6" fill="none" stroke="#f0b020" stroke-width="2.4"/>
<rect x="733" y="64" width="12" height="26" fill="#d4d4d4"/><rect x="749" y="64" width="11" height="18" fill="#d4d4d4"/><path d="M739 83v8M735 87h8M754 77v8M750 81h8" stroke="#3cc0c0" stroke-width="2.5"/>
<g fill="#d4d4d4"><rect x="778" y="71" width="7" height="7"/><rect x="800" y="71" width="7" height="7"/><rect x="789" y="85" width="7" height="7"/><rect x="785" y="74" width="15" height="2"/><rect x="792" y="70" width="2" height="16"/></g><rect x="789" y="63" width="7" height="7" fill="#3cc0c0"/>
<rect x="817" y="63" width="31" height="30" rx="4" fill="#d6d6d6" stroke="#3a3a3a" stroke-width="1"/><path d="M832.5 68l5.5 6h-3v5h-5v-5h-3z" fill="#3c3c3c"/>
<text transform="translate(864.5,92) scale(0.8,1)" font-size="36" font-weight="bold" fill="#d4d4d4" font-family="Liberation Sans">3</text>
<path d="M879.5 71.5A7 7 0 1 1 886.5 78.5" fill="none" stroke="#f0b020" stroke-width="3.2" stroke-dasharray="2.6 1.4 25 1.4 3"/>
<path d="M907 67V91H931" fill="none" stroke="#d4d4d4" stroke-width="2.6"/><path d="M907 78.5H913a7 7 0 0 1 7 7V91" fill="none" stroke="#d4d4d4" stroke-width="2.4"/>
<path d="M918.3 71.5A7 7 0 1 1 925.3 78.5" fill="none" stroke="#f0b020" stroke-width="3.2" stroke-dasharray="2.6 1.4 25 1.4 3"/>
<circle cx="950" cy="73" r="3.6" fill="none" stroke="#d4d4d4" stroke-width="2.6"/><circle cx="968" cy="86" r="3.6" fill="none" stroke="#d4d4d4" stroke-width="2.6"/><path d="M953 92l12-25" stroke="#d4d4d4" stroke-width="2"/>
<path d="M957.9 71.5A7 7 0 1 1 964.9 78.5" fill="none" stroke="#f0b020" stroke-width="3.2" stroke-dasharray="2.6 1.4 25 1.4 3"/>
<path d="M992 67l7 9h-14zM985 82h14l-7 9z" fill="#d4d4d4"/>
<path d="M998 71.5A7 7 0 1 1 1005 78.5" fill="none" stroke="#f0b020" stroke-width="3.2" stroke-dasharray="2.6 1.4 25 1.4 3"/>
<path d="M1041 67q-4 0-4 4v5q0 3.5-3 3.5q3 0 3 3.5v5q0 4 4 4M1047 67q4 0 4 4v5q0 3.5 3 3.5q-3 0-3 3.5v5q0 4-4 4" fill="none" stroke="#d4d4d4" stroke-width="3"/><path d="M1048 84l12-16" stroke="#3a3020" stroke-width="5"/><path d="M1048 84l12-16" stroke="#f0b020" stroke-width="3"/>
<path d="M1230 66l8 4v22l-8-4z" fill="#d4d4d4"/><path d="M1244 64v28" stroke="#d4d4d4" stroke-width="2" stroke-dasharray="3 2"/><path d="M1258 66l-8 4v22l8-4z" fill="#3cc0c0"/>
<path d="M1271 64v28" stroke="#3cc0c0" stroke-width="2" stroke-dasharray="3 2"/><rect x="1275" y="67" width="15" height="8" fill="#d4d4d4"/><rect x="1275" y="79" width="20" height="8" fill="#d4d4d4"/>
<rect x="1319" y="64" width="25" height="28" fill="#d4d4d4"/><g fill="#333"><rect x="1322" y="68" width="19" height="2"/><rect x="1322" y="73" width="4" height="2"/><rect x="1328" y="73" width="13" height="2"/><rect x="1322" y="79" width="4" height="2"/><rect x="1328" y="79" width="13" height="2"/><rect x="1322" y="85" width="4" height="2"/><rect x="1328" y="85" width="13" height="2"/></g>
<rect x="1359" y="64" width="25" height="28" fill="#d4d4d4" stroke="#333" stroke-width="1"/><rect x="1362" y="67" width="19" height="2" fill="#333"/><g fill="#333" stroke="#d4d4d4" stroke-width="1"><path d="M1364 87.6L1372 84.2L1380 87.6L1372 91Z"/><path d="M1364 82.4L1372 79L1380 82.4L1372 85.8Z"/><path d="M1364 76.8L1372 73.4L1380 76.8L1372 80.2Z"/></g>
<rect x="1405" y="64" width="26" height="28" fill="#d4d4d4" stroke="#333" stroke-width="1"/><rect x="1417" y="64" width="14" height="9" fill="none" stroke="#333" stroke-width="1"/><path d="M1424 64v9" stroke="#333"/><g fill="#333"><rect x="1409" y="79" width="7" height="2"/><rect x="1419" y="79" width="7" height="2"/><rect x="1409" y="85" width="7" height="2"/><rect x="1419" y="85" width="7" height="2"/></g>
<rect x="1444" y="64" width="28" height="28" fill="#d4d4d4"/><rect x="1444" y="69" width="28" height="1" fill="#444"/><g fill="#333"><rect x="1446" y="65" width="3" height="3"/><rect x="1451" y="65" width="3" height="3"/><rect x="1456" y="65" width="3" height="3"/></g><path d="M1447 84q4-10 8-3t8 3q3 0 5-4" fill="none" stroke="#3cc0c0" stroke-width="2.5"/>
<rect x="1484" y="64" width="28" height="4" fill="#d4d4d4"/><path d="M1498 70v10" stroke="#3cc0c0" stroke-width="4"/><path d="M1491 77h14l-7 7z" fill="#3cc0c0"/><rect x="1484" y="86" width="28" height="5" fill="#3cc0c0"/>
<rect x="1532" y="64" width="28" height="28" fill="#d4d4d4"/><rect x="1532" y="69" width="28" height="1" fill="#444"/><g fill="#333"><rect x="1534" y="65" width="3" height="3"/><rect x="1539" y="65" width="3" height="3"/><rect x="1544" y="65" width="3" height="3"/></g><circle cx="1540" cy="82" r="6" fill="none" stroke="#333" stroke-width="1.5"/><path d="M1536 79h8M1536 85h8M1537 76v12M1543 76v12" stroke="#333" stroke-width="1"/><g fill="#333"><rect x="1549" y="74" width="9" height="2"/><rect x="1549" y="79" width="9" height="2"/><rect x="1549" y="84" width="9" height="2"/><rect x="1549" y="89" width="9" height="2"/></g>
<path d="M1818 71l6 7-6 7M1825 71l6 7-6 7" fill="none" stroke="#e0e0e0" stroke-width="2"/>
<path d="M1898 71l6 7-6 7M1905 71l6 7-6 7" fill="none" stroke="#e0e0e0" stroke-width="2"/>
<path d="M1859 65h18l4 4v22h-22z" fill="#d4d4d4" stroke="#333" stroke-width="1.2"/><rect x="1863" y="66" width="13" height="7" fill="#3a3a3a"/><rect x="1862" y="80" width="9" height="9" fill="none" stroke="#333" stroke-width="1.2"/><circle cx="1878" cy="87" r="6" fill="#3cc0c0" stroke="#333" stroke-width="1"/><path d="M1877 83v5h3" stroke="#222" stroke-width="1.5" fill="none"/>
<rect x="613" y="108" width="17" height="9" rx="3" fill="#e0e0e0"/><path d="M618 110h7l-3.5 4z" fill="#333"/><path d="M637 110h6l-3 4z" fill="#ccc"/>
<rect x="2" y="101" width="1" height="1" fill="#aaa"/><rect x="4" y="102" width="1" height="1" fill="#aaa"/>
<rect x="2" y="103" width="1" height="1" fill="#aaa"/><rect x="4" y="104" width="1" height="1" fill="#aaa"/>
<rect x="2" y="105" width="1" height="1" fill="#aaa"/><rect x="4" y="106" width="1" height="1" fill="#aaa"/>
<rect x="2" y="107" width="1" height="1" fill="#aaa"/><rect x="4" y="108" width="1" height="1" fill="#aaa"/>
<rect x="2" y="109" width="1" height="1" fill="#aaa"/><rect x="4" y="110" width="1" height="1" fill="#aaa"/>
<rect x="2" y="111" width="1" height="1" fill="#aaa"/><rect x="4" y="112" width="1" height="1" fill="#aaa"/>
<rect x="2" y="113" width="1" height="1" fill="#aaa"/><rect x="4" y="114" width="1" height="1" fill="#aaa"/>
<rect x="2" y="115" width="1" height="1" fill="#aaa"/><rect x="4" y="116" width="1" height="1" fill="#aaa"/>
<rect x="2" y="117" width="1" height="1" fill="#aaa"/><rect x="4" y="118" width="1" height="1" fill="#aaa"/>
<rect x="2" y="119" width="1" height="1" fill="#aaa"/><rect x="4" y="120" width="1" height="1" fill="#aaa"/>
<rect x="2" y="121" width="1" height="1" fill="#aaa"/><rect x="4" y="122" width="1" height="1" fill="#aaa"/>
<rect x="2" y="123" width="1" height="1" fill="#aaa"/><rect x="4" y="124" width="1" height="1" fill="#aaa"/>
<rect x="2" y="125" width="1" height="1" fill="#aaa"/><rect x="4" y="126" width="1" height="1" fill="#aaa"/>
<rect x="2" y="127" width="1" height="1" fill="#aaa"/><rect x="4" y="128" width="1" height="1" fill="#aaa"/>
<rect x="2" y="129" width="1" height="1" fill="#aaa"/><rect x="4" y="130" width="1" height="1" fill="#aaa"/>
<rect x="2" y="131" width="1" height="1" fill="#aaa"/><rect x="4" y="132" width="1" height="1" fill="#aaa"/>
<rect x="2" y="133" width="1" height="1" fill="#aaa"/><rect x="4" y="134" width="1" height="1" fill="#aaa"/>
<rect x="2" y="135" width="1" height="1" fill="#aaa"/><rect x="4" y="136" width="1" height="1" fill="#aaa"/>
<rect x="2" y="137" width="1" height="1" fill="#aaa"/><rect x="4" y="138" width="1" height="1" fill="#aaa"/>
<rect x="2" y="139" width="1" height="1" fill="#aaa"/><rect x="4" y="140" width="1" height="1" fill="#aaa"/>
<rect x="2" y="141" width="1" height="1" fill="#aaa"/><rect x="4" y="142" width="1" height="1" fill="#aaa"/>
<rect x="2" y="143" width="1" height="1" fill="#aaa"/><rect x="4" y="144" width="1" height="1" fill="#aaa"/>
<rect x="2" y="145" width="1" height="1" fill="#aaa"/><rect x="4" y="146" width="1" height="1" fill="#aaa"/>
<rect x="3" y="155" width="1" height="1" fill="#bbb"/><rect x="4" y="157" width="1" height="1" fill="#bbb"/>
<rect x="5" y="155" width="1" height="1" fill="#bbb"/><rect x="6" y="157" width="1" height="1" fill="#bbb"/>
<rect x="7" y="155" width="1" height="1" fill="#bbb"/><rect x="8" y="157" width="1" height="1" fill="#bbb"/>
<rect x="9" y="155" width="1" height="1" fill="#bbb"/><rect x="10" y="157" width="1" height="1" fill="#bbb"/>
<rect x="11" y="155" width="1" height="1" fill="#bbb"/><rect x="12" y="157" width="1" height="1" fill="#bbb"/>
<rect x="13" y="155" width="1" height="1" fill="#bbb"/><rect x="14" y="157" width="1" height="1" fill="#bbb"/>
<rect x="15" y="155" width="1" height="1" fill="#bbb"/><rect x="16" y="157" width="1" height="1" fill="#bbb"/>
<rect x="17" y="155" width="1" height="1" fill="#bbb"/><rect x="18" y="157" width="1" height="1" fill="#bbb"/>
<rect x="19" y="155" width="1" height="1" fill="#bbb"/><rect x="20" y="157" width="1" height="1" fill="#bbb"/>
<rect x="21" y="155" width="1" height="1" fill="#bbb"/><rect x="22" y="157" width="1" height="1" fill="#bbb"/>
<rect x="23" y="155" width="1" height="1" fill="#bbb"/><rect x="24" y="157" width="1" height="1" fill="#bbb"/>
<rect x="25" y="155" width="1" height="1" fill="#bbb"/><rect x="26" y="157" width="1" height="1" fill="#bbb"/>
<rect x="27" y="155" width="1" height="1" fill="#bbb"/><rect x="28" y="157" width="1" height="1" fill="#bbb"/>
<rect x="29" y="155" width="1" height="1" fill="#bbb"/><rect x="30" y="157" width="1" height="1" fill="#bbb"/>
<rect x="31" y="155" width="1" height="1" fill="#bbb"/><rect x="32" y="157" width="1" height="1" fill="#bbb"/>
<rect x="33" y="155" width="1" height="1" fill="#bbb"/><rect x="34" y="157" width="1" height="1" fill="#bbb"/>
<rect x="35" y="155" width="1" height="1" fill="#bbb"/><rect x="36" y="157" width="1" height="1" fill="#bbb"/>
<rect x="37" y="155" width="1" height="1" fill="#bbb"/><rect x="38" y="157" width="1" height="1" fill="#bbb"/>
<rect x="39" y="155" width="1" height="1" fill="#bbb"/><rect x="40" y="157" width="1" height="1" fill="#bbb"/>
<rect x="41" y="155" width="1" height="1" fill="#bbb"/><rect x="42" y="157" width="1" height="1" fill="#bbb"/>
<rect x="43" y="155" width="1" height="1" fill="#bbb"/><rect x="44" y="157" width="1" height="1" fill="#bbb"/>
<rect x="45" y="155" width="1" height="1" fill="#bbb"/><rect x="46" y="157" width="1" height="1" fill="#bbb"/>
<rect x="1674" y="155" width="1" height="1" fill="#bbb"/><rect x="1675" y="157" width="1" height="1" fill="#bbb"/>
<rect x="1674" y="548" width="1" height="1" fill="#bbb"/><rect x="1675" y="550" width="1" height="1" fill="#bbb"/>
<rect x="1676" y="155" width="1" height="1" fill="#bbb"/><rect x="1677" y="157" width="1" height="1" fill="#bbb"/>
<rect x="1676" y="548" width="1" height="1" fill="#bbb"/><rect x="1677" y="550" width="1" height="1" fill="#bbb"/>
<rect x="1678" y="155" width="1" height="1" fill="#bbb"/><rect x="1679" y="157" width="1" height="1" fill="#bbb"/>
<rect x="1678" y="548" width="1" height="1" fill="#bbb"/><rect x="1679" y="550" width="1" height="1" fill="#bbb"/>
<rect x="1680" y="155" width="1" height="1" fill="#bbb"/><rect x="1681" y="157" width="1" height="1" fill="#bbb"/>
<rect x="1680" y="548" width="1" height="1" fill="#bbb"/><rect x="1681" y="550" width="1" height="1" fill="#bbb"/>
<rect x="1682" y="155" width="1" height="1" fill="#bbb"/><rect x="1683" y="157" width="1" height="1" fill="#bbb"/>
<rect x="1682" y="548" width="1" height="1" fill="#bbb"/><rect x="1683" y="550" width="1" height="1" fill="#bbb"/>
<rect x="1684" y="155" width="1" height="1" fill="#bbb"/><rect x="1685" y="157" width="1" height="1" fill="#bbb"/>
<rect x="1684" y="548" width="1" height="1" fill="#bbb"/><rect x="1685" y="550" width="1" height="1" fill="#bbb"/>
<rect x="1686" y="155" width="1" height="1" fill="#bbb"/><rect x="1687" y="157" width="1" height="1" fill="#bbb"/>
<rect x="1686" y="548" width="1" height="1" fill="#bbb"/><rect x="1687" y="550" width="1" height="1" fill="#bbb"/>
<rect x="1688" y="155" width="1" height="1" fill="#bbb"/><rect x="1689" y="157" width="1" height="1" fill="#bbb"/>
<rect x="1688" y="548" width="1" height="1" fill="#bbb"/><rect x="1689" y="550" width="1" height="1" fill="#bbb"/>
<rect x="1690" y="155" width="1" height="1" fill="#bbb"/><rect x="1691" y="157" width="1" height="1" fill="#bbb"/>
<rect x="1690" y="548" width="1" height="1" fill="#bbb"/><rect x="1691" y="550" width="1" height="1" fill="#bbb"/>
<rect x="1692" y="155" width="1" height="1" fill="#bbb"/><rect x="1693" y="157" width="1" height="1" fill="#bbb"/>
<rect x="1692" y="548" width="1" height="1" fill="#bbb"/><rect x="1693" y="550" width="1" height="1" fill="#bbb"/>
<rect x="1694" y="155" width="1" height="1" fill="#bbb"/><rect x="1695" y="157" width="1" height="1" fill="#bbb"/>
<rect x="1694" y="548" width="1" height="1" fill="#bbb"/><rect x="1695" y="550" width="1" height="1" fill="#bbb"/>
<rect x="1696" y="155" width="1" height="1" fill="#bbb"/><rect x="1697" y="157" width="1" height="1" fill="#bbb"/>
<rect x="1696" y="548" width="1" height="1" fill="#bbb"/><rect x="1697" y="550" width="1" height="1" fill="#bbb"/>
<rect x="1698" y="155" width="1" height="1" fill="#bbb"/><rect x="1699" y="157" width="1" height="1" fill="#bbb"/>
<rect x="1698" y="548" width="1" height="1" fill="#bbb"/><rect x="1699" y="550" width="1" height="1" fill="#bbb"/>
<rect x="1700" y="155" width="1" height="1" fill="#bbb"/><rect x="1701" y="157" width="1" height="1" fill="#bbb"/>
<rect x="1700" y="548" width="1" height="1" fill="#bbb"/><rect x="1701" y="550" width="1" height="1" fill="#bbb"/>
<rect x="1702" y="155" width="1" height="1" fill="#bbb"/><rect x="1703" y="157" width="1" height="1" fill="#bbb"/>
<rect x="1702" y="548" width="1" height="1" fill="#bbb"/><rect x="1703" y="550" width="1" height="1" fill="#bbb"/>
<rect x="1704" y="155" width="1" height="1" fill="#bbb"/><rect x="1705" y="157" width="1" height="1" fill="#bbb"/>
<rect x="1704" y="548" width="1" height="1" fill="#bbb"/><rect x="1705" y="550" width="1" height="1" fill="#bbb"/>
<rect x="1706" y="155" width="1" height="1" fill="#bbb"/><rect x="1707" y="157" width="1" height="1" fill="#bbb"/>
<rect x="1706" y="548" width="1" height="1" fill="#bbb"/><rect x="1707" y="550" width="1" height="1" fill="#bbb"/>
<rect x="1708" y="155" width="1" height="1" fill="#bbb"/><rect x="1709" y="157" width="1" height="1" fill="#bbb"/>
<rect x="1708" y="548" width="1" height="1" fill="#bbb"/><rect x="1709" y="550" width="1" height="1" fill="#bbb"/>
<rect x="1710" y="155" width="1" height="1" fill="#bbb"/><rect x="1711" y="157" width="1" height="1" fill="#bbb"/>
<rect x="1710" y="548" width="1" height="1" fill="#bbb"/><rect x="1711" y="550" width="1" height="1" fill="#bbb"/>
<rect x="1712" y="155" width="1" height="1" fill="#bbb"/><rect x="1713" y="157" width="1" height="1" fill="#bbb"/>
<rect x="1712" y="548" width="1" height="1" fill="#bbb"/><rect x="1713" y="550" width="1" height="1" fill="#bbb"/>
<rect x="1714" y="155" width="1" height="1" fill="#bbb"/><rect x="1715" y="157" width="1" height="1" fill="#bbb"/>
<rect x="1714" y="548" width="1" height="1" fill="#bbb"/><rect x="1715" y="550" width="1" height="1" fill="#bbb"/>
<rect x="1716" y="155" width="1" height="1" fill="#bbb"/><rect x="1717" y="157" width="1" height="1" fill="#bbb"/>
<rect x="1716" y="548" width="1" height="1" fill="#bbb"/><rect x="1717" y="550" width="1" height="1" fill="#bbb"/>
<rect x="1718" y="155" width="1" height="1" fill="#bbb"/><rect x="1719" y="157" width="1" height="1" fill="#bbb"/>
<rect x="1718" y="548" width="1" height="1" fill="#bbb"/><rect x="1719" y="550" width="1" height="1" fill="#bbb"/>
<rect x="1720" y="155" width="1" height="1" fill="#bbb"/><rect x="1721" y="157" width="1" height="1" fill="#bbb"/>
<rect x="1720" y="548" width="1" height="1" fill="#bbb"/><rect x="1721" y="550" width="1" height="1" fill="#bbb"/>
<rect x="1722" y="155" width="1" height="1" fill="#bbb"/><rect x="1723" y="157" width="1" height="1" fill="#bbb"/>
<rect x="1722" y="548" width="1" height="1" fill="#bbb"/><rect x="1723" y="550" width="1" height="1" fill="#bbb"/>
<rect x="1724" y="155" width="1" height="1" fill="#bbb"/><rect x="1725" y="157" width="1" height="1" fill="#bbb"/>
<rect x="1724" y="548" width="1" height="1" fill="#bbb"/><rect x="1725" y="550" width="1" height="1" fill="#bbb"/>
<rect x="1726" y="155" width="1" height="1" fill="#bbb"/><rect x="1727" y="157" width="1" height="1" fill="#bbb"/>
<rect x="1726" y="548" width="1" height="1" fill="#bbb"/><rect x="1727" y="550" width="1" height="1" fill="#bbb"/>
<rect x="1728" y="155" width="1" height="1" fill="#bbb"/><rect x="1729" y="157" width="1" height="1" fill="#bbb"/>
<rect x="1728" y="548" width="1" height="1" fill="#bbb"/><rect x="1729" y="550" width="1" height="1" fill="#bbb"/>
<rect x="1730" y="155" width="1" height="1" fill="#bbb"/><rect x="1731" y="157" width="1" height="1" fill="#bbb"/>
<rect x="1730" y="548" width="1" height="1" fill="#bbb"/><rect x="1731" y="550" width="1" height="1" fill="#bbb"/>
<rect x="1732" y="155" width="1" height="1" fill="#bbb"/><rect x="1733" y="157" width="1" height="1" fill="#bbb"/>
<rect x="1732" y="548" width="1" height="1" fill="#bbb"/><rect x="1733" y="550" width="1" height="1" fill="#bbb"/>
<rect x="1734" y="155" width="1" height="1" fill="#bbb"/><rect x="1735" y="157" width="1" height="1" fill="#bbb"/>
<rect x="1734" y="548" width="1" height="1" fill="#bbb"/><rect x="1735" y="550" width="1" height="1" fill="#bbb"/>
<rect x="1736" y="155" width="1" height="1" fill="#bbb"/><rect x="1737" y="157" width="1" height="1" fill="#bbb"/>
<rect x="1736" y="548" width="1" height="1" fill="#bbb"/><rect x="1737" y="550" width="1" height="1" fill="#bbb"/>
<rect x="1738" y="155" width="1" height="1" fill="#bbb"/><rect x="1739" y="157" width="1" height="1" fill="#bbb"/>
<rect x="1738" y="548" width="1" height="1" fill="#bbb"/><rect x="1739" y="550" width="1" height="1" fill="#bbb"/>
<rect x="1740" y="155" width="1" height="1" fill="#bbb"/><rect x="1741" y="157" width="1" height="1" fill="#bbb"/>
<rect x="1740" y="548" width="1" height="1" fill="#bbb"/><rect x="1741" y="550" width="1" height="1" fill="#bbb"/>
<rect x="1742" y="155" width="1" height="1" fill="#bbb"/><rect x="1743" y="157" width="1" height="1" fill="#bbb"/>
<rect x="1742" y="548" width="1" height="1" fill="#bbb"/><rect x="1743" y="550" width="1" height="1" fill="#bbb"/>
<rect x="1744" y="155" width="1" height="1" fill="#bbb"/><rect x="1745" y="157" width="1" height="1" fill="#bbb"/>
<rect x="1744" y="548" width="1" height="1" fill="#bbb"/><rect x="1745" y="550" width="1" height="1" fill="#bbb"/>
<rect x="1746" y="155" width="1" height="1" fill="#bbb"/><rect x="1747" y="157" width="1" height="1" fill="#bbb"/>
<rect x="1746" y="548" width="1" height="1" fill="#bbb"/><rect x="1747" y="550" width="1" height="1" fill="#bbb"/>
<rect x="1748" y="155" width="1" height="1" fill="#bbb"/><rect x="1749" y="157" width="1" height="1" fill="#bbb"/>
<rect x="1748" y="548" width="1" height="1" fill="#bbb"/><rect x="1749" y="550" width="1" height="1" fill="#bbb"/>
<rect x="1750" y="155" width="1" height="1" fill="#bbb"/><rect x="1751" y="157" width="1" height="1" fill="#bbb"/>
<rect x="1750" y="548" width="1" height="1" fill="#bbb"/><rect x="1751" y="550" width="1" height="1" fill="#bbb"/>
<rect x="1752" y="155" width="1" height="1" fill="#bbb"/><rect x="1753" y="157" width="1" height="1" fill="#bbb"/>
<rect x="1752" y="548" width="1" height="1" fill="#bbb"/><rect x="1753" y="550" width="1" height="1" fill="#bbb"/>
<rect x="1754" y="155" width="1" height="1" fill="#bbb"/><rect x="1755" y="157" width="1" height="1" fill="#bbb"/>
<rect x="1754" y="548" width="1" height="1" fill="#bbb"/><rect x="1755" y="550" width="1" height="1" fill="#bbb"/>
<rect x="1756" y="155" width="1" height="1" fill="#bbb"/><rect x="1757" y="157" width="1" height="1" fill="#bbb"/>
<rect x="1756" y="548" width="1" height="1" fill="#bbb"/><rect x="1757" y="550" width="1" height="1" fill="#bbb"/>
<rect x="1758" y="155" width="1" height="1" fill="#bbb"/><rect x="1759" y="157" width="1" height="1" fill="#bbb"/>
<rect x="1758" y="548" width="1" height="1" fill="#bbb"/><rect x="1759" y="550" width="1" height="1" fill="#bbb"/>
<rect x="1760" y="155" width="1" height="1" fill="#bbb"/><rect x="1761" y="157" width="1" height="1" fill="#bbb"/>
<rect x="1760" y="548" width="1" height="1" fill="#bbb"/><rect x="1761" y="550" width="1" height="1" fill="#bbb"/>
<rect x="1762" y="155" width="1" height="1" fill="#bbb"/><rect x="1763" y="157" width="1" height="1" fill="#bbb"/>
<rect x="1762" y="548" width="1" height="1" fill="#bbb"/><rect x="1763" y="550" width="1" height="1" fill="#bbb"/>
<rect x="1764" y="155" width="1" height="1" fill="#bbb"/><rect x="1765" y="157" width="1" height="1" fill="#bbb"/>
<rect x="1764" y="548" width="1" height="1" fill="#bbb"/><rect x="1765" y="550" width="1" height="1" fill="#bbb"/>
<rect x="1766" y="155" width="1" height="1" fill="#bbb"/><rect x="1767" y="157" width="1" height="1" fill="#bbb"/>
<rect x="1766" y="548" width="1" height="1" fill="#bbb"/><rect x="1767" y="550" width="1" height="1" fill="#bbb"/>
<rect x="1768" y="155" width="1" height="1" fill="#bbb"/><rect x="1769" y="157" width="1" height="1" fill="#bbb"/>
<rect x="1768" y="548" width="1" height="1" fill="#bbb"/><rect x="1769" y="550" width="1" height="1" fill="#bbb"/>
<rect x="1770" y="155" width="1" height="1" fill="#bbb"/><rect x="1771" y="157" width="1" height="1" fill="#bbb"/>
<rect x="1770" y="548" width="1" height="1" fill="#bbb"/><rect x="1771" y="550" width="1" height="1" fill="#bbb"/>
<rect x="1772" y="155" width="1" height="1" fill="#bbb"/><rect x="1773" y="157" width="1" height="1" fill="#bbb"/>
<rect x="1772" y="548" width="1" height="1" fill="#bbb"/><rect x="1773" y="550" width="1" height="1" fill="#bbb"/>
<rect x="1774" y="155" width="1" height="1" fill="#bbb"/><rect x="1775" y="157" width="1" height="1" fill="#bbb"/>
<rect x="1774" y="548" width="1" height="1" fill="#bbb"/><rect x="1775" y="550" width="1" height="1" fill="#bbb"/>
<rect x="1776" y="155" width="1" height="1" fill="#bbb"/><rect x="1777" y="157" width="1" height="1" fill="#bbb"/>
<rect x="1776" y="548" width="1" height="1" fill="#bbb"/><rect x="1777" y="550" width="1" height="1" fill="#bbb"/>
<rect x="1778" y="155" width="1" height="1" fill="#bbb"/><rect x="1779" y="157" width="1" height="1" fill="#bbb"/>
<rect x="1778" y="548" width="1" height="1" fill="#bbb"/><rect x="1779" y="550" width="1" height="1" fill="#bbb"/>
<rect x="1780" y="155" width="1" height="1" fill="#bbb"/><rect x="1781" y="157" width="1" height="1" fill="#bbb"/>
<rect x="1780" y="548" width="1" height="1" fill="#bbb"/><rect x="1781" y="550" width="1" height="1" fill="#bbb"/>
<rect x="1782" y="155" width="1" height="1" fill="#bbb"/><rect x="1783" y="157" width="1" height="1" fill="#bbb"/>
<rect x="1782" y="548" width="1" height="1" fill="#bbb"/><rect x="1783" y="550" width="1" height="1" fill="#bbb"/>
<rect x="1784" y="155" width="1" height="1" fill="#bbb"/><rect x="1785" y="157" width="1" height="1" fill="#bbb"/>
<rect x="1784" y="548" width="1" height="1" fill="#bbb"/><rect x="1785" y="550" width="1" height="1" fill="#bbb"/>
<rect x="1786" y="155" width="1" height="1" fill="#bbb"/><rect x="1787" y="157" width="1" height="1" fill="#bbb"/>
<rect x="1786" y="548" width="1" height="1" fill="#bbb"/><rect x="1787" y="550" width="1" height="1" fill="#bbb"/>
<rect x="1788" y="155" width="1" height="1" fill="#bbb"/><rect x="1789" y="157" width="1" height="1" fill="#bbb"/>
<rect x="1788" y="548" width="1" height="1" fill="#bbb"/><rect x="1789" y="550" width="1" height="1" fill="#bbb"/>
<rect x="1790" y="155" width="1" height="1" fill="#bbb"/><rect x="1791" y="157" width="1" height="1" fill="#bbb"/>
<rect x="1790" y="548" width="1" height="1" fill="#bbb"/><rect x="1791" y="550" width="1" height="1" fill="#bbb"/>
<rect x="1792" y="155" width="1" height="1" fill="#bbb"/><rect x="1793" y="157" width="1" height="1" fill="#bbb"/>
<rect x="1792" y="548" width="1" height="1" fill="#bbb"/><rect x="1793" y="550" width="1" height="1" fill="#bbb"/>
<rect x="1794" y="155" width="1" height="1" fill="#bbb"/><rect x="1795" y="157" width="1" height="1" fill="#bbb"/>
<rect x="1794" y="548" width="1" height="1" fill="#bbb"/><rect x="1795" y="550" width="1" height="1" fill="#bbb"/>
<rect x="1796" y="155" width="1" height="1" fill="#bbb"/><rect x="1797" y="157" width="1" height="1" fill="#bbb"/>
<rect x="1796" y="548" width="1" height="1" fill="#bbb"/><rect x="1797" y="550" width="1" height="1" fill="#bbb"/>
<rect x="1798" y="155" width="1" height="1" fill="#bbb"/><rect x="1799" y="157" width="1" height="1" fill="#bbb"/>
<rect x="1798" y="548" width="1" height="1" fill="#bbb"/><rect x="1799" y="550" width="1" height="1" fill="#bbb"/>
<rect x="1800" y="155" width="1" height="1" fill="#bbb"/><rect x="1801" y="157" width="1" height="1" fill="#bbb"/>
<rect x="1800" y="548" width="1" height="1" fill="#bbb"/><rect x="1801" y="550" width="1" height="1" fill="#bbb"/>
<rect x="1802" y="155" width="1" height="1" fill="#bbb"/><rect x="1803" y="157" width="1" height="1" fill="#bbb"/>
<rect x="1802" y="548" width="1" height="1" fill="#bbb"/><rect x="1803" y="550" width="1" height="1" fill="#bbb"/>
<rect x="1804" y="155" width="1" height="1" fill="#bbb"/><rect x="1805" y="157" width="1" height="1" fill="#bbb"/>
<rect x="1804" y="548" width="1" height="1" fill="#bbb"/><rect x="1805" y="550" width="1" height="1" fill="#bbb"/>
<rect x="1806" y="155" width="1" height="1" fill="#bbb"/><rect x="1807" y="157" width="1" height="1" fill="#bbb"/>
<rect x="1806" y="548" width="1" height="1" fill="#bbb"/><rect x="1807" y="550" width="1" height="1" fill="#bbb"/>
<rect x="1808" y="155" width="1" height="1" fill="#bbb"/><rect x="1809" y="157" width="1" height="1" fill="#bbb"/>
<rect x="1808" y="548" width="1" height="1" fill="#bbb"/><rect x="1809" y="550" width="1" height="1" fill="#bbb"/>
<rect x="1810" y="155" width="1" height="1" fill="#bbb"/><rect x="1811" y="157" width="1" height="1" fill="#bbb"/>
<rect x="1810" y="548" width="1" height="1" fill="#bbb"/><rect x="1811" y="550" width="1" height="1" fill="#bbb"/>
<rect x="1812" y="155" width="1" height="1" fill="#bbb"/><rect x="1813" y="157" width="1" height="1" fill="#bbb"/>
<rect x="1812" y="548" width="1" height="1" fill="#bbb"/><rect x="1813" y="550" width="1" height="1" fill="#bbb"/>
<rect x="1814" y="155" width="1" height="1" fill="#bbb"/><rect x="1815" y="157" width="1" height="1" fill="#bbb"/>
<rect x="1814" y="548" width="1" height="1" fill="#bbb"/><rect x="1815" y="550" width="1" height="1" fill="#bbb"/>
<rect x="1816" y="155" width="1" height="1" fill="#bbb"/><rect x="1817" y="157" width="1" height="1" fill="#bbb"/>
<rect x="1816" y="548" width="1" height="1" fill="#bbb"/><rect x="1817" y="550" width="1" height="1" fill="#bbb"/>
<rect x="1818" y="155" width="1" height="1" fill="#bbb"/><rect x="1819" y="157" width="1" height="1" fill="#bbb"/>
<rect x="1818" y="548" width="1" height="1" fill="#bbb"/><rect x="1819" y="550" width="1" height="1" fill="#bbb"/>
<rect x="1820" y="155" width="1" height="1" fill="#bbb"/><rect x="1821" y="157" width="1" height="1" fill="#bbb"/>
<rect x="1820" y="548" width="1" height="1" fill="#bbb"/><rect x="1821" y="550" width="1" height="1" fill="#bbb"/>
<rect x="1822" y="155" width="1" height="1" fill="#bbb"/><rect x="1823" y="157" width="1" height="1" fill="#bbb"/>
<rect x="1822" y="548" width="1" height="1" fill="#bbb"/><rect x="1823" y="550" width="1" height="1" fill="#bbb"/>
<rect x="1824" y="155" width="1" height="1" fill="#bbb"/><rect x="1825" y="157" width="1" height="1" fill="#bbb"/>
<rect x="1824" y="548" width="1" height="1" fill="#bbb"/><rect x="1825" y="550" width="1" height="1" fill="#bbb"/>
<rect x="1826" y="155" width="1" height="1" fill="#bbb"/><rect x="1827" y="157" width="1" height="1" fill="#bbb"/>
<rect x="1826" y="548" width="1" height="1" fill="#bbb"/><rect x="1827" y="550" width="1" height="1" fill="#bbb"/>
<rect x="1828" y="155" width="1" height="1" fill="#bbb"/><rect x="1829" y="157" width="1" height="1" fill="#bbb"/>
<rect x="1828" y="548" width="1" height="1" fill="#bbb"/><rect x="1829" y="550" width="1" height="1" fill="#bbb"/>
<rect x="1830" y="155" width="1" height="1" fill="#bbb"/><rect x="1831" y="157" width="1" height="1" fill="#bbb"/>
<rect x="1830" y="548" width="1" height="1" fill="#bbb"/><rect x="1831" y="550" width="1" height="1" fill="#bbb"/>
<rect x="1832" y="155" width="1" height="1" fill="#bbb"/><rect x="1833" y="157" width="1" height="1" fill="#bbb"/>
<rect x="1832" y="548" width="1" height="1" fill="#bbb"/><rect x="1833" y="550" width="1" height="1" fill="#bbb"/>
<rect x="1834" y="155" width="1" height="1" fill="#bbb"/><rect x="1835" y="157" width="1" height="1" fill="#bbb"/>
<rect x="1834" y="548" width="1" height="1" fill="#bbb"/><rect x="1835" y="550" width="1" height="1" fill="#bbb"/>
<rect x="1836" y="155" width="1" height="1" fill="#bbb"/><rect x="1837" y="157" width="1" height="1" fill="#bbb"/>
<rect x="1836" y="548" width="1" height="1" fill="#bbb"/><rect x="1837" y="550" width="1" height="1" fill="#bbb"/>
<rect x="1838" y="155" width="1" height="1" fill="#bbb"/><rect x="1839" y="157" width="1" height="1" fill="#bbb"/>
<rect x="1838" y="548" width="1" height="1" fill="#bbb"/><rect x="1839" y="550" width="1" height="1" fill="#bbb"/>
<rect x="1840" y="155" width="1" height="1" fill="#bbb"/><rect x="1841" y="157" width="1" height="1" fill="#bbb"/>
<rect x="1840" y="548" width="1" height="1" fill="#bbb"/><rect x="1841" y="550" width="1" height="1" fill="#bbb"/>
<rect x="1842" y="155" width="1" height="1" fill="#bbb"/><rect x="1843" y="157" width="1" height="1" fill="#bbb"/>
<rect x="1842" y="548" width="1" height="1" fill="#bbb"/><rect x="1843" y="550" width="1" height="1" fill="#bbb"/>
<rect x="1844" y="155" width="1" height="1" fill="#bbb"/><rect x="1845" y="157" width="1" height="1" fill="#bbb"/>
<rect x="1844" y="548" width="1" height="1" fill="#bbb"/><rect x="1845" y="550" width="1" height="1" fill="#bbb"/>
<rect x="1846" y="155" width="1" height="1" fill="#bbb"/><rect x="1847" y="157" width="1" height="1" fill="#bbb"/>
<rect x="1846" y="548" width="1" height="1" fill="#bbb"/><rect x="1847" y="550" width="1" height="1" fill="#bbb"/>
<rect x="1848" y="155" width="1" height="1" fill="#bbb"/><rect x="1849" y="157" width="1" height="1" fill="#bbb"/>
<rect x="1848" y="548" width="1" height="1" fill="#bbb"/><rect x="1849" y="550" width="1" height="1" fill="#bbb"/>
<rect x="1850" y="155" width="1" height="1" fill="#bbb"/><rect x="1851" y="157" width="1" height="1" fill="#bbb"/>
<rect x="1850" y="548" width="1" height="1" fill="#bbb"/><rect x="1851" y="550" width="1" height="1" fill="#bbb"/>
<rect x="1852" y="155" width="1" height="1" fill="#bbb"/><rect x="1853" y="157" width="1" height="1" fill="#bbb"/>
<rect x="1852" y="548" width="1" height="1" fill="#bbb"/><rect x="1853" y="550" width="1" height="1" fill="#bbb"/>
<rect x="1854" y="155" width="1" height="1" fill="#bbb"/><rect x="1855" y="157" width="1" height="1" fill="#bbb"/>
<rect x="1854" y="548" width="1" height="1" fill="#bbb"/><rect x="1855" y="550" width="1" height="1" fill="#bbb"/>
<rect x="1856" y="155" width="1" height="1" fill="#bbb"/><rect x="1857" y="157" width="1" height="1" fill="#bbb"/>
<rect x="1856" y="548" width="1" height="1" fill="#bbb"/><rect x="1857" y="550" width="1" height="1" fill="#bbb"/>
<rect x="1858" y="155" width="1" height="1" fill="#bbb"/><rect x="1859" y="157" width="1" height="1" fill="#bbb"/>
<rect x="1858" y="548" width="1" height="1" fill="#bbb"/><rect x="1859" y="550" width="1" height="1" fill="#bbb"/>
<rect x="1860" y="155" width="1" height="1" fill="#bbb"/><rect x="1861" y="157" width="1" height="1" fill="#bbb"/>
<rect x="1860" y="548" width="1" height="1" fill="#bbb"/><rect x="1861" y="550" width="1" height="1" fill="#bbb"/>
<rect x="1862" y="155" width="1" height="1" fill="#bbb"/><rect x="1863" y="157" width="1" height="1" fill="#bbb"/>
<rect x="1862" y="548" width="1" height="1" fill="#bbb"/><rect x="1863" y="550" width="1" height="1" fill="#bbb"/>
<rect x="1864" y="155" width="1" height="1" fill="#bbb"/><rect x="1865" y="157" width="1" height="1" fill="#bbb"/>
<rect x="1864" y="548" width="1" height="1" fill="#bbb"/><rect x="1865" y="550" width="1" height="1" fill="#bbb"/>
<rect x="1866" y="155" width="1" height="1" fill="#bbb"/><rect x="1867" y="157" width="1" height="1" fill="#bbb"/>
<rect x="1866" y="548" width="1" height="1" fill="#bbb"/><rect x="1867" y="550" width="1" height="1" fill="#bbb"/>
<rect x="1868" y="155" width="1" height="1" fill="#bbb"/><rect x="1869" y="157" width="1" height="1" fill="#bbb"/>
<rect x="1868" y="548" width="1" height="1" fill="#bbb"/><rect x="1869" y="550" width="1" height="1" fill="#bbb"/>
<rect x="1870" y="155" width="1" height="1" fill="#bbb"/><rect x="1871" y="157" width="1" height="1" fill="#bbb"/>
<rect x="1870" y="548" width="1" height="1" fill="#bbb"/><rect x="1871" y="550" width="1" height="1" fill="#bbb"/>
<rect x="1872" y="155" width="1" height="1" fill="#bbb"/><rect x="1873" y="157" width="1" height="1" fill="#bbb"/>
<rect x="1872" y="548" width="1" height="1" fill="#bbb"/><rect x="1873" y="550" width="1" height="1" fill="#bbb"/>
<rect x="1874" y="155" width="1" height="1" fill="#bbb"/><rect x="1875" y="157" width="1" height="1" fill="#bbb"/>
<rect x="1874" y="548" width="1" height="1" fill="#bbb"/><rect x="1875" y="550" width="1" height="1" fill="#bbb"/>
<rect x="1876" y="155" width="1" height="1" fill="#bbb"/><rect x="1877" y="157" width="1" height="1" fill="#bbb"/>
<rect x="1876" y="548" width="1" height="1" fill="#bbb"/><rect x="1877" y="550" width="1" height="1" fill="#bbb"/>
<rect x="1878" y="155" width="1" height="1" fill="#bbb"/><rect x="1879" y="157" width="1" height="1" fill="#bbb"/>
<rect x="1878" y="548" width="1" height="1" fill="#bbb"/><rect x="1879" y="550" width="1" height="1" fill="#bbb"/>
<rect x="1880" y="155" width="1" height="1" fill="#bbb"/><rect x="1881" y="157" width="1" height="1" fill="#bbb"/>
<rect x="1880" y="548" width="1" height="1" fill="#bbb"/><rect x="1881" y="550" width="1" height="1" fill="#bbb"/>
<rect x="1882" y="155" width="1" height="1" fill="#bbb"/><rect x="1883" y="157" width="1" height="1" fill="#bbb"/>
<rect x="1882" y="548" width="1" height="1" fill="#bbb"/><rect x="1883" y="550" width="1" height="1" fill="#bbb"/>
<rect x="1884" y="155" width="1" height="1" fill="#bbb"/><rect x="1885" y="157" width="1" height="1" fill="#bbb"/>
<rect x="1884" y="548" width="1" height="1" fill="#bbb"/><rect x="1885" y="550" width="1" height="1" fill="#bbb"/>
<rect x="1886" y="155" width="1" height="1" fill="#bbb"/><rect x="1887" y="157" width="1" height="1" fill="#bbb"/>
<rect x="1886" y="548" width="1" height="1" fill="#bbb"/><rect x="1887" y="550" width="1" height="1" fill="#bbb"/>
<rect x="1888" y="155" width="1" height="1" fill="#bbb"/><rect x="1889" y="157" width="1" height="1" fill="#bbb"/>
<rect x="1888" y="548" width="1" height="1" fill="#bbb"/><rect x="1889" y="550" width="1" height="1" fill="#bbb"/>
<rect x="1890" y="155" width="1" height="1" fill="#bbb"/><rect x="1891" y="157" width="1" height="1" fill="#bbb"/>
<rect x="1890" y="548" width="1" height="1" fill="#bbb"/><rect x="1891" y="550" width="1" height="1" fill="#bbb"/>
<rect x="1892" y="155" width="1" height="1" fill="#bbb"/><rect x="1893" y="157" width="1" height="1" fill="#bbb"/>
<rect x="1892" y="548" width="1" height="1" fill="#bbb"/><rect x="1893" y="550" width="1" height="1" fill="#bbb"/>
<rect x="1894" y="155" width="1" height="1" fill="#bbb"/><rect x="1895" y="157" width="1" height="1" fill="#bbb"/>
<rect x="1894" y="548" width="1" height="1" fill="#bbb"/><rect x="1895" y="550" width="1" height="1" fill="#bbb"/>
<rect x="1896" y="155" width="1" height="1" fill="#bbb"/><rect x="1897" y="157" width="1" height="1" fill="#bbb"/>
<rect x="1896" y="548" width="1" height="1" fill="#bbb"/><rect x="1897" y="550" width="1" height="1" fill="#bbb"/>
<rect x="1898" y="155" width="1" height="1" fill="#bbb"/><rect x="1899" y="157" width="1" height="1" fill="#bbb"/>
<rect x="1898" y="548" width="1" height="1" fill="#bbb"/><rect x="1899" y="550" width="1" height="1" fill="#bbb"/>
<rect x="1900" y="155" width="1" height="1" fill="#bbb"/><rect x="1901" y="157" width="1" height="1" fill="#bbb"/>
<rect x="1900" y="548" width="1" height="1" fill="#bbb"/><rect x="1901" y="550" width="1" height="1" fill="#bbb"/>
<rect x="1902" y="155" width="1" height="1" fill="#bbb"/><rect x="1903" y="157" width="1" height="1" fill="#bbb"/>
<rect x="1902" y="548" width="1" height="1" fill="#bbb"/><rect x="1903" y="550" width="1" height="1" fill="#bbb"/>
<rect x="1904" y="155" width="1" height="1" fill="#bbb"/><rect x="1905" y="157" width="1" height="1" fill="#bbb"/>
<rect x="1904" y="548" width="1" height="1" fill="#bbb"/><rect x="1905" y="550" width="1" height="1" fill="#bbb"/>
<rect x="1906" y="155" width="1" height="1" fill="#bbb"/><rect x="1907" y="157" width="1" height="1" fill="#bbb"/>
<rect x="1906" y="548" width="1" height="1" fill="#bbb"/><rect x="1907" y="550" width="1" height="1" fill="#bbb"/>
<rect x="1908" y="155" width="1" height="1" fill="#bbb"/><rect x="1909" y="157" width="1" height="1" fill="#bbb"/>
<rect x="1908" y="548" width="1" height="1" fill="#bbb"/><rect x="1909" y="550" width="1" height="1" fill="#bbb"/>
<rect x="1910" y="155" width="1" height="1" fill="#bbb"/><rect x="1911" y="157" width="1" height="1" fill="#bbb"/>
<rect x="1910" y="548" width="1" height="1" fill="#bbb"/><rect x="1911" y="550" width="1" height="1" fill="#bbb"/>
<rect x="1912" y="155" width="1" height="1" fill="#bbb"/><rect x="1913" y="157" width="1" height="1" fill="#bbb"/>
<rect x="1912" y="548" width="1" height="1" fill="#bbb"/><rect x="1913" y="550" width="1" height="1" fill="#bbb"/>
<rect x="1914" y="155" width="1" height="1" fill="#bbb"/><rect x="1915" y="157" width="1" height="1" fill="#bbb"/>
<rect x="1914" y="548" width="1" height="1" fill="#bbb"/><rect x="1915" y="550" width="1" height="1" fill="#bbb"/>
<rect x="1916" y="155" width="1" height="1" fill="#bbb"/><rect x="1917" y="157" width="1" height="1" fill="#bbb"/>
<rect x="1916" y="548" width="1" height="1" fill="#bbb"/><rect x="1917" y="550" width="1" height="1" fill="#bbb"/>
<path d="M295 163h17l-6 7v7h-5v-7z" fill="#6e6e6e"/>
<path d="M1113 163h17l-6 7v7h-5v-7z" fill="#6e6e6e"/>
<path d="M295 525h17l-6 7v7h-5v-7z" fill="#6e6e6e"/>
<path d="M1183 525h17l-6 7v7h-5v-7z" fill="#6e6e6e"/>
<rect x="12" y="778" width="24" height="25" rx="3" fill="#555"/><path d="M21 785l8 5.5-8 5.5z" fill="#e8e8e8"/>
<defs><linearGradient id="lg" x1="0" y1="0" x2="0" y2="1"><stop offset="0" stop-color="#5676a0"/><stop offset="1" stop-color="#3f88e8"/></linearGradient></defs><rect x="5" y="816" width="45" height="55" rx="4" fill="url(#lg)"/>
<g fill="#666d78" stroke="#2c3e5a" stroke-width="1.2"><rect x="9.5" y="826.5" width="17" height="15" rx="1.5"/><rect x="28.5" y="826.5" width="17" height="15" rx="1.5"/><rect x="9.5" y="843.5" width="17" height="15" rx="1.5"/><rect x="28.5" y="843.5" width="17" height="15" rx="1.5"/></g>
<path d="M1691 174v20M1681 184h20" stroke="#a8a8a8" stroke-width="2.5"/>
<rect x="1722.5" y="172.5" width="18" height="18" fill="none" stroke="#3cc0c0" stroke-width="2"/><g fill="#3d3d3d" stroke="#3cc0c0" stroke-width="1.2"><rect x="1721" y="171" width="4" height="4"/><rect x="1738" y="171" width="4" height="4"/><rect x="1721" y="188" width="4" height="4"/><rect x="1738" y="188" width="4" height="4"/></g><path d="M1726 187q3-10 12-12" fill="none" stroke="#ddd" stroke-width="1.8"/>
<rect x="1764" y="172" width="15" height="7" fill="#a0a0a0"/><path d="M1771.5 179v4M1765 187v-4h13v4" fill="none" stroke="#3cc0c0" stroke-width="1.3"/><rect x="1762" y="187" width="6" height="6" fill="#3cc0c0"/><rect x="1776" y="187" width="6" height="6" fill="#3cc0c0"/>
<circle cx="1815" cy="182" r="8.5" fill="#a8a8a8"/><path d="M1808 175a10 10 0 0 0 0 14M1805 176a10 10 0 0 0 0 12" fill="none" stroke="#3cc0c0" stroke-width="1.2"/>
<rect x="1842" y="174" width="19" height="11" fill="#a8a8a8"/><rect x="1850" y="186" width="3" height="3" fill="#a8a8a8"/><rect x="1846" y="189" width="11" height="2" fill="#a8a8a8"/>
<path d="M1886.3 173.8A3.8 3.8 0 1 1 1882.3 177" fill="none" stroke="#a8a8a8" stroke-width="2.6"/><path d="M1888 179.5L1898.5 190" stroke="#a8a8a8" stroke-width="2.6" stroke-linecap="round"/><circle cx="1898.8" cy="190" r="1.8" fill="#3a3a3a" stroke="#a8a8a8" stroke-width="1.2"/>
<rect x="1712" y="168" width="1" height="27" fill="#444"/>
<rect x="1751" y="168" width="1" height="27" fill="#444"/>
<rect x="1791" y="168" width="1" height="27" fill="#444"/>
<rect x="1831" y="168" width="1" height="27" fill="#444"/>
<rect x="1871" y="168" width="1" height="27" fill="#444"/>
<rect x="1911" y="168" width="1" height="27" fill="#444"/>
<path d="M1899 245h9l-4.5 6z" fill="#e8e8e8"/>
<path d="M1682 456l8-8M1688 441l9 9-3 2-8-8z" stroke="#2a2a2a" stroke-width="2.5" fill="#333"/>
<rect x="1711" y="434" width="2" height="20" fill="#111"/><rect x="1753" y="434" width="2" height="20" fill="#111"/><rect x="1825" y="434" width="2" height="20" fill="#111"/>
<rect x="1728.5" y="433.5" width="8" height="22" rx="2" fill="none" stroke="#2e3a4a" stroke-width="1.5"/><rect x="1730.5" y="437.5" width="4" height="14" rx="1" fill="none" stroke="#2e3a4a" stroke-width="1"/>
<circle cx="1768" cy="438" r="5" fill="#3a3a3a" stroke="#2a2a2a"/><circle cx="1776" cy="449" r="6" fill="#3a3a3a" stroke="#2a2a2a"/><circle cx="1781" cy="449" r="5" fill="none" stroke="#2a2a2a"/>
<rect x="1796" y="434" width="17" height="3" fill="#333"/><path d="M1798 438h13l-1 17h-11z" fill="#333" stroke="#2a2a2a"/><path d="M1802 440v13M1805 440v13M1808 440v13" stroke="#444"/>
<rect x="1835" y="432" width="17" height="22" fill="#d4d4d4"/><g fill="none" stroke="#333" stroke-width="1"><rect x="1837.5" y="439.5" width="5" height="5"/><rect x="1845.5" y="439.5" width="5" height="5"/><rect x="1837.5" y="447.5" width="5" height="5"/><rect x="1845.5" y="447.5" width="5" height="5"/></g><path d="M1846 444l9-10" stroke="#f0b020" stroke-width="3.5"/>
<rect x="1790" y="476" width="1" height="1" fill="#ddd"/>
<rect x="1792" y="476" width="1" height="1" fill="#ddd"/>
<rect x="1794" y="476" width="1" height="1" fill="#ddd"/>
<rect x="1796" y="476" width="1" height="1" fill="#ddd"/>
<rect x="1798" y="476" width="1" height="1" fill="#ddd"/>
<rect x="1800" y="476" width="1" height="1" fill="#ddd"/>
<path d="M1871 595l12 12M1883 595l-12 12" stroke="#b0b0b0" stroke-width="2.5"/>
<path d="M1905 588.5l3.0 3.5-3.0 3.5M1908.5 588.5l3.0 3.5-3.0 3.5" fill="none" stroke="#6a6aa8" stroke-width="1.5"/>
<path d="M1681 828.5l3.0 3.5-3.0 3.5M1684.5 828.5l3.0 3.5-3.0 3.5" fill="none" stroke="#6a6a9a" stroke-width="1.5"/>
<path d="M1908 843.8l3.5999999999999996 4.2-3.5999999999999996 4.2M1912.2 843.8l3.5999999999999996 4.2-3.5999999999999996 4.2" fill="none" stroke="#5c5c90" stroke-width="2"/>
<rect x="1672" y="622" width="23" height="24" fill="#5a89cf"/>
<rect x="1672" y="649" width="23" height="24" fill="#5a89cf"/>
<rect x="1672" y="676" width="23" height="24" fill="#5a89cf"/>
<rect x="1672" y="703" width="23" height="24" fill="#5a89cf"/>
<rect x="1672" y="730" width="23" height="24" fill="#5a89cf"/>
<rect x="1672" y="757" width="23" height="24" fill="#5a89cf"/>
<rect x="1672" y="784" width="23" height="24" fill="#5a89cf"/>
<circle cx="1683.5" cy="634" r="7" fill="#e0e0e0" stroke="#333" stroke-width="1"/>
<circle cx="1681" cy="659" r="5.5" fill="#e0e0e0" stroke="#333"/><rect x="1681" y="658" width="9" height="9" fill="#e0e0e0" stroke="#333"/>
<circle cx="1683.5" cy="685" r="6" fill="#e0e0e0" stroke="#333"/><rect x="1681" y="690" width="5" height="5" fill="#e0e0e0" stroke="#333"/>
<rect x="1675" y="710" width="13" height="11" rx="2" fill="#e0e0e0" stroke="#333"/><path d="M1688 715l5-3v7z" fill="#e0e0e0" stroke="#333"/>
<path d="M1676 733v18h16z" fill="#e0e0e0" stroke="#333"/><path d="M1679 741v7h7z" fill="#5a89cf"/>
<path d="M1675 762q4-3 8 0t9 0M1675 768q4-3 8 0t9 0M1675 774q4-3 8 0t9 0" fill="none" stroke="#e0e0e0" stroke-width="1.8"/>
<rect x="1675.5" y="787.5" width="17" height="17" fill="none" stroke="#3cc0c0" stroke-width="1.2"/><circle cx="1681.5" cy="793.5" r="4" fill="#ddd" stroke="#333"/><rect x="1683" y="795" width="7" height="7" fill="#ddd" stroke="#333"/>
<rect x="1701" y="650" width="1" height="1" fill="#6a6a6a"/>
<rect x="1701" y="652" width="1" height="1" fill="#6a6a6a"/>
<rect x="1701" y="654" width="1" height="1" fill="#6a6a6a"/>
<rect x="1701" y="656" width="1" height="1" fill="#6a6a6a"/>
<rect x="1701" y="658" width="1" height="1" fill="#6a6a6a"/>
<rect x="1701" y="660" width="1" height="1" fill="#6a6a6a"/>
<rect x="1701" y="662" width="1" height="1" fill="#6a6a6a"/>
<rect x="1701" y="664" width="1" height="1" fill="#6a6a6a"/>
<rect x="1701" y="666" width="1" height="1" fill="#6a6a6a"/>
<rect x="1701" y="668" width="1" height="1" fill="#6a6a6a"/>
<rect x="1701" y="670" width="1" height="1" fill="#6a6a6a"/>
<rect x="1701" y="672" width="1" height="1" fill="#6a6a6a"/>
<rect x="1701" y="674" width="1" height="1" fill="#6a6a6a"/>
<rect x="1701" y="676" width="1" height="1" fill="#6a6a6a"/>
<rect x="1701" y="678" width="1" height="1" fill="#6a6a6a"/>
<rect x="1701" y="680" width="1" height="1" fill="#6a6a6a"/>
<rect x="1701" y="682" width="1" height="1" fill="#6a6a6a"/>
<rect x="1701" y="684" width="1" height="1" fill="#6a6a6a"/>
<rect x="1701" y="686" width="1" height="1" fill="#6a6a6a"/>
<rect x="1701" y="688" width="1" height="1" fill="#6a6a6a"/>
<rect x="1701" y="690" width="1" height="1" fill="#6a6a6a"/>
<rect x="1701" y="692" width="1" height="1" fill="#6a6a6a"/>
<rect x="1701" y="694" width="1" height="1" fill="#6a6a6a"/>
<rect x="1701" y="696" width="1" height="1" fill="#6a6a6a"/>
<rect x="1701" y="698" width="1" height="1" fill="#6a6a6a"/>
<rect x="1701" y="700" width="1" height="1" fill="#6a6a6a"/>
<rect x="1701" y="702" width="1" height="1" fill="#6a6a6a"/>
<rect x="1701" y="704" width="1" height="1" fill="#6a6a6a"/>
<rect x="1701" y="706" width="1" height="1" fill="#6a6a6a"/>
<rect x="1701" y="708" width="1" height="1" fill="#6a6a6a"/>
<rect x="1701" y="710" width="1" height="1" fill="#6a6a6a"/>
<rect x="1701" y="712" width="1" height="1" fill="#6a6a6a"/>
<rect x="1701" y="714" width="1" height="1" fill="#6a6a6a"/>
<rect x="1701" y="716" width="1" height="1" fill="#6a6a6a"/>
<rect x="1701" y="718" width="1" height="1" fill="#6a6a6a"/>
<rect x="1701" y="720" width="1" height="1" fill="#6a6a6a"/>
<rect x="1701" y="722" width="1" height="1" fill="#6a6a6a"/>
<rect x="1701" y="724" width="1" height="1" fill="#6a6a6a"/>
<rect x="1701" y="726" width="1" height="1" fill="#6a6a6a"/>
<rect x="1701" y="728" width="1" height="1" fill="#6a6a6a"/>
<rect x="1701" y="730" width="1" height="1" fill="#6a6a6a"/>
<rect x="1701" y="732" width="1" height="1" fill="#6a6a6a"/>
<rect x="1701" y="734" width="1" height="1" fill="#6a6a6a"/>
<rect x="1701" y="736" width="1" height="1" fill="#6a6a6a"/>
<rect x="1701" y="738" width="1" height="1" fill="#6a6a6a"/>
<rect x="1701" y="740" width="1" height="1" fill="#6a6a6a"/>
<rect x="1701" y="742" width="1" height="1" fill="#6a6a6a"/>
<rect x="1701" y="744" width="1" height="1" fill="#6a6a6a"/>
<rect x="1701" y="746" width="1" height="1" fill="#6a6a6a"/>
<rect x="1701" y="748" width="1" height="1" fill="#6a6a6a"/>
<rect x="1701" y="750" width="1" height="1" fill="#6a6a6a"/>
<rect x="1701" y="752" width="1" height="1" fill="#6a6a6a"/>
<rect x="1701" y="754" width="1" height="1" fill="#6a6a6a"/>
<rect x="1701" y="756" width="1" height="1" fill="#6a6a6a"/>
<rect x="1701" y="758" width="1" height="1" fill="#6a6a6a"/>
<rect x="1701" y="760" width="1" height="1" fill="#6a6a6a"/>
<rect x="1701" y="762" width="1" height="1" fill="#6a6a6a"/>
<rect x="1701" y="764" width="1" height="1" fill="#6a6a6a"/>
<rect x="1701" y="766" width="1" height="1" fill="#6a6a6a"/>
<rect x="1701" y="768" width="1" height="1" fill="#6a6a6a"/>
<path d="M1706 647l6 6-6 6z" fill="#fff"/>
<path d="M1717 652q9-9 18 0q-9 8-18 0z" fill="#d0d0d0"/><circle cx="1726" cy="652" r="3" fill="#333"/>
<path d="M1745 644l8 4-8 4-8-4z" fill="#3cc0c0"/><path d="M1737 652l8 4 8-4v2l-8 4-8-4zM1737 656l8 4 8-4v2l-8 4-8-4z" fill="#3cc0c0"/>
<path d="M1912 645v16M1905 653h12M1907 649l4 4-4 4M1917 649l-4 4 4 4" fill="none" stroke="#2a2a2a" stroke-width="2.2"/>
<path d="M1706 669l6 6-6 6z" fill="#fff"/>
<path d="M1717 674q9-9 18 0q-9 8-18 0z" fill="#d0d0d0"/><circle cx="1726" cy="674" r="3" fill="#333"/>
<path d="M1745 666l8 4-8 4-8-4z" fill="#2e2e2e"/><path d="M1737 674l8 4 8-4v2l-8 4-8-4zM1737 678l8 4 8-4v2l-8 4-8-4z" fill="#2e2e2e"/>
<path d="M1912 667v16M1905 675h12M1907 671l4 4-4 4M1917 671l-4 4 4 4" fill="none" stroke="#2a2a2a" stroke-width="2.2"/>
<path d="M1706 691l6 6-6 6z" fill="#fff"/>
<path d="M1717 696q9-9 18 0q-9 8-18 0z" fill="#d0d0d0"/><circle cx="1726" cy="696" r="3" fill="#333"/>
<path d="M1745 688l8 4-8 4-8-4z" fill="#2e2e2e"/><path d="M1737 696l8 4 8-4v2l-8 4-8-4zM1737 700l8 4 8-4v2l-8 4-8-4z" fill="#2e2e2e"/>
<path d="M1912 689v16M1905 697h12M1907 693l4 4-4 4M1917 693l-4 4 4 4" fill="none" stroke="#2a2a2a" stroke-width="2.2"/>
<path d="M1706 713l6 6-6 6z" fill="#fff"/>
<path d="M1717 718q9-9 18 0q-9 8-18 0z" fill="#d0d0d0"/><circle cx="1726" cy="718" r="3" fill="#333"/>
<path d="M1745 710l8 4-8 4-8-4z" fill="#2e2e2e"/><path d="M1737 718l8 4 8-4v2l-8 4-8-4zM1737 722l8 4 8-4v2l-8 4-8-4z" fill="#2e2e2e"/>
<path d="M1912 711v16M1905 719h12M1907 715l4 4-4 4M1917 715l-4 4 4 4" fill="none" stroke="#2a2a2a" stroke-width="2.2"/>
<path d="M1706 735l6 6-6 6z" fill="#fff"/>
<path d="M1717 740q9-9 18 0q-9 8-18 0z" fill="#d0d0d0"/><circle cx="1726" cy="740" r="3" fill="#333"/>
<path d="M1745 732l8 4-8 4-8-4z" fill="#2e2e2e"/><path d="M1737 740l8 4 8-4v2l-8 4-8-4zM1737 744l8 4 8-4v2l-8 4-8-4z" fill="#2e2e2e"/>
<path d="M1912 733v16M1905 741h12M1907 737l4 4-4 4M1917 737l-4 4 4 4" fill="none" stroke="#2a2a2a" stroke-width="2.2"/>
<path d="M1706 757l6 6-6 6z" fill="#fff"/>
<path d="M1717 762q9-9 18 0q-9 8-18 0z" fill="#d0d0d0"/><circle cx="1726" cy="762" r="3" fill="#333"/>
<path d="M1745 754l8 4-8 4-8-4z" fill="#2e2e2e"/><path d="M1737 762l8 4 8-4v2l-8 4-8-4zM1737 766l8 4 8-4v2l-8 4-8-4z" fill="#2e2e2e"/>
<path d="M1912 755v16M1905 763h12M1907 759l4 4-4 4M1917 759l-4 4 4 4" fill="none" stroke="#2a2a2a" stroke-width="2.2"/>
<path d="M1886 633h8l-4-6z" fill="#fff"/>
<path d="M1862 855.5h8l-4 4z" fill="#000"/>
<rect x="80.0" y="907" width="1" height="29" fill="#8a8a8a"/><rect x="97.7" y="907" width="1" height="13" fill="#8a8a8a"/><rect x="115.4" y="907" width="1" height="13" fill="#8a8a8a"/><rect x="133.1" y="907" width="1" height="13" fill="#8a8a8a"/><rect x="150.8" y="907" width="1" height="13" fill="#8a8a8a"/><rect x="168.6" y="907" width="1" height="29" fill="#8a8a8a"/><rect x="186.3" y="907" width="1" height="13" fill="#8a8a8a"/><rect x="204.0" y="907" width="1" height="13" fill="#8a8a8a"/><rect x="221.7" y="907" width="1" height="13" fill="#8a8a8a"/><rect x="239.4" y="907" width="1" height="13" fill="#8a8a8a"/><rect x="257.1" y="907" width="1" height="29" fill="#8a8a8a"/><rect x="274.8" y="907" width="1" height="13" fill="#8a8a8a"/><rect x="292.5" y="907" width="1" height="13" fill="#8a8a8a"/><rect x="310.2" y="907" width="1" height="13" fill="#8a8a8a"/><rect x="327.9" y="907" width="1" height="13" fill="#8a8a8a"/><rect x="345.7" y="907" width="1" height="29" fill="#8a8a8a"/><rect x="363.4" y="907" width="1" height="13" fill="#8a8a8a"/><rect x="381.1" y="907" width="1" height="13" fill="#8a8a8a"/><rect x="398.8" y="907" width="1" height="13" fill="#8a8a8a"/><rect x="416.5" y="907" width="1" height="13" fill="#8a8a8a"/><rect x="434.2" y="907" width="1" height="29" fill="#8a8a8a"/><rect x="451.9" y="907" width="1" height="13" fill="#8a8a8a"/><rect x="469.6" y="907" width="1" height="13" fill="#8a8a8a"/><rect x="487.3" y="907" width="1" height="13" fill="#8a8a8a"/><rect x="505.0" y="907" width="1" height="13" fill="#8a8a8a"/><rect x="522.8" y="907" width="1" height="29" fill="#8a8a8a"/><rect x="540.5" y="907" width="1" height="13" fill="#8a8a8a"/><rect x="558.2" y="907" width="1" height="13" fill="#8a8a8a"/><rect x="575.9" y="907" width="1" height="13" fill="#8a8a8a"/><rect x="593.6" y="907" width="1" height="13" fill="#8a8a8a"/><rect x="611.3" y="907" width="1" height="29" fill="#8a8a8a"/><rect x="629.0" y="907" width="1" height="13" fill="#8a8a8a"/><rect x="646.7" y="907" width="1" height="13" fill="#8a8a8a"/><rect x="664.4" y="907" width="1" height="13" fill="#8a8a8a"/><rect x="682.1" y="907" width="1" height="13" fill="#8a8a8a"/><rect x="699.9" y="907" width="1" height="29" fill="#8a8a8a"/><rect x="717.6" y="907" width="1" height="13" fill="#8a8a8a"/><rect x="735.3" y="907" width="1" height="13" fill="#8a8a8a"/><rect x="753.0" y="907" width="1" height="13" fill="#8a8a8a"/><rect x="770.7" y="907" width="1" height="13" fill="#8a8a8a"/><rect x="788.4" y="907" width="1" height="29" fill="#8a8a8a"/><rect x="806.1" y="907" width="1" height="13" fill="#8a8a8a"/><rect x="823.8" y="907" width="1" height="13" fill="#8a8a8a"/><rect x="841.5" y="907" width="1" height="13" fill="#8a8a8a"/><rect x="859.2" y="907" width="1" height="13" fill="#8a8a8a"/><rect x="877.0" y="907" width="1" height="29" fill="#8a8a8a"/><rect x="894.7" y="907" width="1" height="13" fill="#8a8a8a"/><rect x="912.4" y="907" width="1" height="13" fill="#8a8a8a"/><rect x="930.1" y="907" width="1" height="13" fill="#8a8a8a"/><rect x="947.8" y="907" width="1" height="13" fill="#8a8a8a"/><rect x="965.5" y="907" width="1" height="29" fill="#8a8a8a"/><rect x="983.2" y="907" width="1" height="13" fill="#8a8a8a"/><rect x="1000.9" y="907" width="1" height="13" fill="#8a8a8a"/><rect x="1018.6" y="907" width="1" height="13" fill="#8a8a8a"/><rect x="1036.3" y="907" width="1" height="13" fill="#8a8a8a"/><rect x="1054.1" y="907" width="1" height="29" fill="#8a8a8a"/><rect x="1071.8" y="907" width="1" height="13" fill="#8a8a8a"/><rect x="1089.5" y="907" width="1" height="13" fill="#8a8a8a"/><rect x="1107.2" y="907" width="1" height="13" fill="#8a8a8a"/><rect x="1124.9" y="907" width="1" height="13" fill="#8a8a8a"/><rect x="1142.6" y="907" width="1" height="29" fill="#8a8a8a"/><rect x="1160.3" y="907" width="1" height="13" fill="#8a8a8a"/><rect x="1178.0" y="907" width="1" height="13" fill="#8a8a8a"/><rect x="1195.7" y="907" width="1" height="13" fill="#8a8a8a"/><rect x="1213.4" y="907" width="1" height="13" fill="#8a8a8a"/><rect x="1231.2" y="907" width="1" height="29" fill="#8a8a8a"/><rect x="1248.9" y="907" width="1" height="13" fill="#8a8a8a"/><rect x="1266.6" y="907" width="1" height="13" fill="#8a8a8a"/><rect x="1284.3" y="907" width="1" height="13" fill="#8a8a8a"/><rect x="1302.0" y="907" width="1" height="13" fill="#8a8a8a"/><rect x="1319.7" y="907" width="1" height="29" fill="#8a8a8a"/><rect x="1337.4" y="907" width="1" height="13" fill="#8a8a8a"/><rect x="1355.1" y="907" width="1" height="13" fill="#8a8a8a"/><rect x="1372.8" y="907" width="1" height="13" fill="#8a8a8a"/><rect x="1390.5" y="907" width="1" height="13" fill="#8a8a8a"/><rect x="1408.2" y="907" width="1" height="29" fill="#8a8a8a"/><rect x="1426.0" y="907" width="1" height="13" fill="#8a8a8a"/><rect x="1443.7" y="907" width="1" height="13" fill="#8a8a8a"/><rect x="1461.4" y="907" width="1" height="13" fill="#8a8a8a"/><rect x="1479.1" y="907" width="1" height="13" fill="#8a8a8a"/><rect x="1496.8" y="907" width="1" height="29" fill="#8a8a8a"/><rect x="1514.5" y="907" width="1" height="13" fill="#8a8a8a"/><rect x="1532.2" y="907" width="1" height="13" fill="#8a8a8a"/><rect x="1549.9" y="907" width="1" height="13" fill="#8a8a8a"/><rect x="1567.6" y="907" width="1" height="13" fill="#8a8a8a"/><rect x="1585.4" y="907" width="1" height="29" fill="#8a8a8a"/><rect x="1603.1" y="907" width="1" height="13" fill="#8a8a8a"/><rect x="1620.8" y="907" width="1" height="13" fill="#8a8a8a"/><rect x="1638.5" y="907" width="1" height="13" fill="#8a8a8a"/><rect x="1656.2" y="907" width="1" height="13" fill="#8a8a8a"/><rect x="1673.9" y="907" width="1" height="29" fill="#8a8a8a"/><rect x="1691.6" y="907" width="1" height="13" fill="#8a8a8a"/><rect x="1709.3" y="907" width="1" height="13" fill="#8a8a8a"/><rect x="1727.0" y="907" width="1" height="13" fill="#8a8a8a"/><rect x="1744.7" y="907" width="1" height="13" fill="#8a8a8a"/><rect x="1762.5" y="907" width="1" height="29" fill="#8a8a8a"/><rect x="1780.2" y="907" width="1" height="13" fill="#8a8a8a"/><rect x="1797.9" y="907" width="1" height="13" fill="#8a8a8a"/><rect x="1815.6" y="907" width="1" height="13" fill="#8a8a8a"/><rect x="1833.3" y="907" width="1" height="13" fill="#8a8a8a"/><rect x="1851.0" y="907" width="1" height="29" fill="#8a8a8a"/>
<g font-family="Liberation Sans" font-size="12" fill="#d0d0d0"><text x="168.6" y="933" text-anchor="middle">5</text><text x="257.1" y="933" text-anchor="middle">10</text><text x="345.7" y="933" text-anchor="middle">15</text><text x="434.2" y="933" text-anchor="middle">20</text><text x="522.8" y="933" text-anchor="middle">25</text><text x="611.3" y="933" text-anchor="middle">30</text><text x="699.9" y="933" text-anchor="middle">35</text><text x="788.4" y="933" text-anchor="middle">40</text><text x="877.0" y="933" text-anchor="middle">45</text><text x="965.5" y="933" text-anchor="middle">50</text><text x="1054.1" y="933" text-anchor="middle">55</text><text x="1142.6" y="933" text-anchor="middle">60</text><text x="1231.2" y="933" text-anchor="middle">65</text><text x="1319.7" y="933" text-anchor="middle">70</text><text x="1408.2" y="933" text-anchor="middle">75</text><text x="1496.8" y="933" text-anchor="middle">80</text><text x="1585.4" y="933" text-anchor="middle">85</text><text x="1673.9" y="933" text-anchor="middle">90</text><text x="1762.5" y="933" text-anchor="middle">95</text><text x="1851.0" y="933" text-anchor="middle">100</text></g>
<text x="80.5" y="934" text-anchor="middle" font-family="Liberation Sans" font-size="12" fill="#e0e060">0</text>
<g fill="#ccc"><rect x="28" y="915" width="4" height="1.5"/><rect x="28" y="918" width="4" height="1.5"/><rect x="28" y="921" width="4" height="1.5"/><rect x="28" y="924" width="4" height="1.5"/></g><path d="M33 922q3-8 6 0t6 0" fill="none" stroke="#3cc0c0" stroke-width="1.6"/>
<rect x="2" y="880" width="1" height="1" fill="#aaa"/><rect x="4" y="881" width="1" height="1" fill="#aaa"/>
<rect x="2" y="882" width="1" height="1" fill="#aaa"/><rect x="4" y="883" width="1" height="1" fill="#aaa"/>
<rect x="2" y="884" width="1" height="1" fill="#aaa"/><rect x="4" y="885" width="1" height="1" fill="#aaa"/>
<rect x="2" y="886" width="1" height="1" fill="#aaa"/><rect x="4" y="887" width="1" height="1" fill="#aaa"/>
<rect x="2" y="888" width="1" height="1" fill="#aaa"/><rect x="4" y="889" width="1" height="1" fill="#aaa"/>
<rect x="2" y="890" width="1" height="1" fill="#aaa"/><rect x="4" y="891" width="1" height="1" fill="#aaa"/>
<rect x="2" y="892" width="1" height="1" fill="#aaa"/><rect x="4" y="893" width="1" height="1" fill="#aaa"/>
<rect x="2" y="894" width="1" height="1" fill="#aaa"/><rect x="4" y="895" width="1" height="1" fill="#aaa"/>
<rect x="2" y="896" width="1" height="1" fill="#aaa"/><rect x="4" y="897" width="1" height="1" fill="#aaa"/>
<rect x="2" y="898" width="1" height="1" fill="#aaa"/><rect x="4" y="899" width="1" height="1" fill="#aaa"/>
<rect x="2" y="900" width="1" height="1" fill="#aaa"/><rect x="4" y="901" width="1" height="1" fill="#aaa"/>
<rect x="2" y="902" width="1" height="1" fill="#aaa"/><rect x="4" y="903" width="1" height="1" fill="#aaa"/>
<rect x="2" y="904" width="1" height="1" fill="#aaa"/><rect x="4" y="905" width="1" height="1" fill="#aaa"/>
<rect x="2" y="906" width="1" height="1" fill="#aaa"/><rect x="4" y="907" width="1" height="1" fill="#aaa"/>
<rect x="2" y="908" width="1" height="1" fill="#aaa"/><rect x="4" y="909" width="1" height="1" fill="#aaa"/>
<rect x="2" y="910" width="1" height="1" fill="#aaa"/><rect x="4" y="911" width="1" height="1" fill="#aaa"/>
<rect x="2" y="912" width="1" height="1" fill="#aaa"/><rect x="4" y="913" width="1" height="1" fill="#aaa"/>
<rect x="2" y="914" width="1" height="1" fill="#aaa"/><rect x="4" y="915" width="1" height="1" fill="#aaa"/>
<rect x="2" y="916" width="1" height="1" fill="#aaa"/><rect x="4" y="917" width="1" height="1" fill="#aaa"/>
<rect x="2" y="918" width="1" height="1" fill="#aaa"/><rect x="4" y="919" width="1" height="1" fill="#aaa"/>
<rect x="2" y="920" width="1" height="1" fill="#aaa"/><rect x="4" y="921" width="1" height="1" fill="#aaa"/>
<rect x="2" y="922" width="1" height="1" fill="#aaa"/><rect x="4" y="923" width="1" height="1" fill="#aaa"/>
<rect x="2" y="924" width="1" height="1" fill="#aaa"/><rect x="4" y="925" width="1" height="1" fill="#aaa"/>
<rect x="2" y="926" width="1" height="1" fill="#aaa"/><rect x="4" y="927" width="1" height="1" fill="#aaa"/>
<rect x="2" y="928" width="1" height="1" fill="#aaa"/><rect x="4" y="929" width="1" height="1" fill="#aaa"/>
<rect x="2" y="930" width="1" height="1" fill="#aaa"/><rect x="4" y="931" width="1" height="1" fill="#aaa"/>
<rect x="2" y="932" width="1" height="1" fill="#aaa"/><rect x="4" y="933" width="1" height="1" fill="#aaa"/>
<rect x="2" y="934" width="1" height="1" fill="#aaa"/><rect x="4" y="935" width="1" height="1" fill="#aaa"/>
<rect x="2" y="936" width="1" height="1" fill="#aaa"/><rect x="4" y="937" width="1" height="1" fill="#aaa"/>
<rect x="2" y="938" width="1" height="1" fill="#aaa"/><rect x="4" y="939" width="1" height="1" fill="#aaa"/>
<rect x="2" y="940" width="1" height="1" fill="#aaa"/><rect x="4" y="941" width="1" height="1" fill="#aaa"/>
<rect x="2" y="942" width="1" height="1" fill="#aaa"/><rect x="4" y="943" width="1" height="1" fill="#aaa"/>
<rect x="2" y="944" width="1" height="1" fill="#aaa"/><rect x="4" y="945" width="1" height="1" fill="#aaa"/>
<rect x="2" y="946" width="1" height="1" fill="#aaa"/><rect x="4" y="947" width="1" height="1" fill="#aaa"/>
<rect x="2" y="948" width="1" height="1" fill="#aaa"/><rect x="4" y="949" width="1" height="1" fill="#aaa"/>
<rect x="2" y="950" width="1" height="1" fill="#aaa"/><rect x="4" y="951" width="1" height="1" fill="#aaa"/>
<path d="M815 969v-6h5M834 969v-6h-5M815 976v6h5M834 976v6h-5" fill="none" stroke="#aaa" stroke-width="1.3"/><rect x="821" y="968" width="7" height="6" fill="none" stroke="#aaa" stroke-width="1.2"/><path d="M815 976l6-3h8l5 3" fill="none" stroke="#aaa" stroke-width="1.2"/>
<path d="M838 987h-5l5-5z" fill="#ddd"/>
<rect x="851" y="970" width="13" height="11" rx="1.5" fill="none" stroke="#999" stroke-width="1.4"/><path d="M853 970v-4a4.5 4.5 0 0 1 9 0v4" fill="none" stroke="#999" stroke-width="1.4"/><circle cx="857.5" cy="975" r="1.5" fill="#999"/>
<rect x="882" y="964" width="15" height="15" fill="none" stroke="#ddd" stroke-width="1.5"/><circle cx="889.5" cy="971.5" r="4" fill="none" stroke="#ddd" stroke-width="2"/><path d="M883 965l4 4M896 965l-4 4M883 978l4-4M896 978l-4-4" stroke="#ddd" stroke-width="1.5"/>
<path d="M1052 997l7 3v6q0 5-7 8-7-3-7-8v-6z" fill="#ddd"/><path d="M1052 997v17M1045 1005h14" stroke="#555" stroke-width="1"/>
<path d="M1194 997l7 4v8l-7 4-7-4v-8z" fill="none" stroke="#ddd" stroke-width="1.3"/><path d="M1187 1001l7 4 7-4M1194 1005v8" fill="none" stroke="#ddd" stroke-width="1.3"/>
<g fill="#d8d8d8"><rect x="1361" y="964" width="3" height="16"/><path d="M1371 964v16l-7-8z M1379 964v16l-7-8z"/><rect x="1385" y="963" width="2" height="18" fill="#111"/><path d="M1399 964v16l-7-8z"/><rect x="1401" y="964" width="3" height="16"/><rect x="1406" y="964" width="3" height="16"/><path d="M1422 963v18l15-9z"/><path d="M1437 983h-4l4-4z"/><rect x="1447" y="964" width="3" height="16"/><rect x="1452" y="964" width="3" height="16"/><path d="M1458 964v16l7-8z"/><rect x="1473" y="963" width="2" height="18" fill="#111"/><path d="M1479 964v16l7-8zM1487 964v16l7-8z"/><rect x="1495" y="964" width="3" height="16"/></g>
<g fill="#d8d8d8"><path d="M1369 991v12l-6-6zM1372 991v12l6-6z"/></g><rect x="1385" y="987" width="2" height="22" fill="#111"/><rect x="1476" y="987" width="2" height="22" fill="#111"/>
<path d="M1466 995l3-4 3 4zM1466 1000l3 4 3-4z" fill="#ccc"/>
<circle cx="1489" cy="996" r="6" fill="#d8d8d8"/><path d="M1489 992v4h3" stroke="#333" stroke-width="1.3" fill="none"/><circle cx="1495" cy="1003" r="4" fill="#f0b020"/><circle cx="1495" cy="1003" r="1.5" fill="#333"/>
<rect x="1541" y="968" width="7" height="31" fill="#d8d8d8"/><rect x="1529" y="981" width="30.5" height="7" fill="#d8d8d8"/><g transform="translate(1553,993) rotate(-40)"><rect x="-9" y="-3.5" width="8" height="7" rx="3.5" fill="#585858" stroke="#3cc0c0" stroke-width="2"/><path d="M-1 0H12M8 0v3M11 0v3" fill="none" stroke="#3cc0c0" stroke-width="2"/></g>
<path d="M1760 967h9l-4.5 6z" fill="#e8e8e8"/>
<path d="M1647.5 994q1 8-2 14M1660.5 994q-1 8 2 14" fill="none" stroke="#3cc0c0" stroke-width="2"/><circle cx="1646" cy="993" r="2" fill="#ddd"/><circle cx="1660" cy="993" r="2" fill="#ddd"/><rect x="1651" y="990" width="5" height="5" fill="#3cc0c0" stroke="#ddd" stroke-width="1"/><path d="M1666 1012h-5l5-5z" fill="#ddd"/>
<rect x="1798.5" y="968" width="9" height="6" rx="1" fill="#3cc0c0" stroke="#2a2a2a" stroke-width="0.8"/><path d="M1808.0 971.0l3-2.5v5z" fill="#3cc0c0" stroke="#2a2a2a" stroke-width="0.6"/>
<path d="M1814.5 963v16M1812 966l2.5-3.5 2.5 3.5M1812 976l2.5 3.5 2.5-3.5" fill="none" stroke="#ddd" stroke-width="1.3"/>
<path d="M1827 968l4-4 6 -1 6 1 3 4-3 5h-12z" fill="#d8d8d8"/><path d="M1833 964v9M1838 963v10" stroke="#444" stroke-width="0.8"/>
<rect x="1834.5" y="974.5" width="8" height="5.5" rx="1" fill="#f0b020" stroke="#2a2a2a" stroke-width="0.8"/><path d="M1843.0 977.25l3-2.5v5z" fill="#f0b020" stroke="#2a2a2a" stroke-width="0.6"/>
<path d="M1859 964q-5 7 1 13M1871 964q4 6 -1 12" fill="none" stroke="#ddd" stroke-width="1.6"/><path d="M1857 963l3-2 1 3zM1870 961l3 2-3 1z" fill="#ddd"/>
<rect x="1862.5" y="974.5" width="8" height="5.5" rx="1" fill="#f0b020" stroke="#2a2a2a" stroke-width="0.8"/><path d="M1871.0 977.25l3-2.5v5z" fill="#f0b020" stroke="#2a2a2a" stroke-width="0.6"/>
<path d="M1887 973l3-3 3 3-3 3zM1882 978l3-3 3 3-3 3z M1891 969l3-3v6z" fill="#d0d0d0"/><path d="M1897 962l5 3v9l-5 3-5-3v-9z" fill="#3cc0c0" stroke="#255" stroke-width="0.8"/><path d="M1897 968v9" stroke="#255" stroke-width="0.8"/>
<path d="M1801 990l13 8-13 8" fill="none" stroke="#ddd" stroke-width="1.3"/><circle cx="1808" cy="998" r="3" fill="none" stroke="#ddd" stroke-width="1.2"/>
<rect x="1831" y="991" width="8" height="6" fill="#ddd"/><path d="M1839.5 994l2-2v4z" fill="#ddd"/><path d="M1830 1002h12l2 5h-16z" fill="#3cc0c0" stroke="#255" stroke-width="0.6"/>
<circle cx="1863" cy="997" r="7" fill="#d0d0d0"/><path d="M1856 1004q8-2 16-13" fill="none" stroke="#ddd" stroke-width="1.2"/>
<rect x="1862.5" y="1001" width="8" height="5.5" rx="1" fill="#f0b020" stroke="#2a2a2a" stroke-width="0.8"/><path d="M1871.0 1003.75l3-2.5v5z" fill="#f0b020" stroke="#2a2a2a" stroke-width="0.6"/>
<rect x="1884" y="990" width="16" height="16" fill="#d8d8d8"/><path d="M1887 1003l9-9M1891 992h7v7z" fill="#333" stroke="#333" stroke-width="2"/><rect x="1885" y="998" width="6" height="6" fill="#333"/>
<path d="M1821 984h-6l6-6z" fill="#e0e0e0"/>
<path d="M1905 984h-6l6-6z" fill="#e0e0e0"/>
<path d="M1849 1011h-6l6-6z" fill="#e0e0e0"/>
<path d="M1877 1011h-6l6-6z" fill="#e0e0e0"/>
</svg>
</body></html>
